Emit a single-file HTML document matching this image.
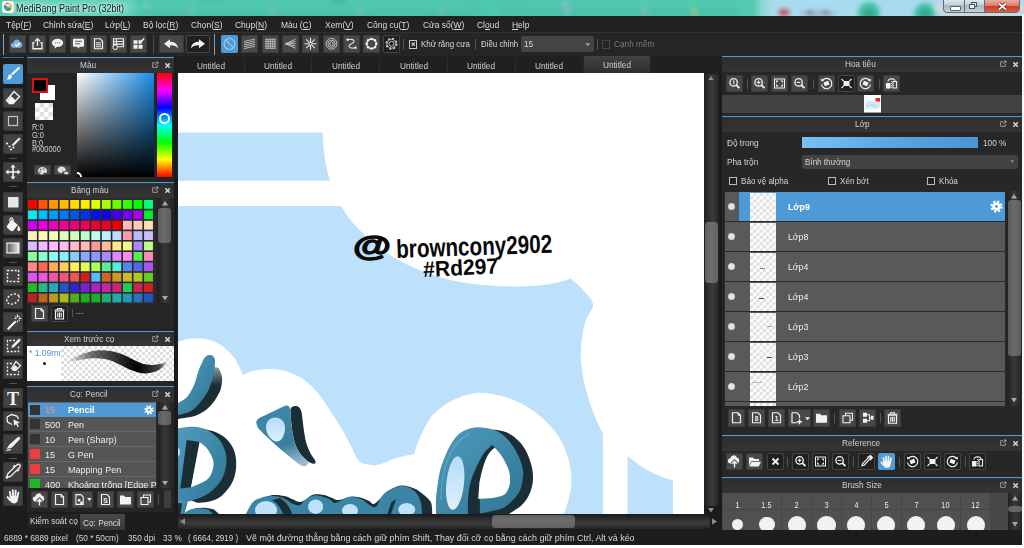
<!DOCTYPE html>
<html lang="vi">
<head>
<meta charset="utf-8">
<title>MediBang Paint Pro (32bit)</title>
<style>
*{box-sizing:border-box;margin:0;padding:0}
html,body{width:1024px;height:548px;overflow:hidden;background:#1f1f1f}
body{position:relative;font-family:"Liberation Sans","DejaVu Sans",sans-serif;font-size:10px;color:#d8d8d8}
.abs{position:absolute}
.x{position:absolute;display:block;white-space:nowrap;transform-origin:0 0;transform:scaleX(.87);line-height:12px;font-size:10px}
#title{left:0;top:0;width:1024px;height:16px;background:linear-gradient(90deg,#52c9ae 0,#4ec8ad 48%,#52caaf 73.500%,#8fd8d6 74.500%,#a9dcee 75.500%,#a8d9ee 100%);overflow:hidden}
.blob{position:absolute;border-radius:50%;filter:blur(2px)}
#menu{left:0;top:16px;width:1022px;height:16px;background:#212121}
#menu .x{top:2px;color:#dcdcdc}
u{text-decoration-thickness:1px;text-underline-offset:1px}
#tbar{left:0;top:32px;width:1022px;height:24px;background:#252525;border-top:1px solid #313131}
.b{position:absolute;width:17px;height:17px;border-radius:2px;background:#484848;box-shadow:inset 0 0 0 1px #3a3a3a}
.b.on{background:#4d9bd8;box-shadow:none}
.b.dk{background:#202020;box-shadow:inset 0 0 0 1px #454545}
.b svg,.tool svg{position:absolute;left:0;top:0;width:100%;height:100%;overflow:visible}
.sep{position:absolute;width:1px;background:#555}
.ph{position:absolute;height:16px;background:linear-gradient(#2f2e2e,#343434);border-top:1px solid #5596cf;box-shadow:inset 0 1px 0 #23384d;overflow:hidden}
.ph .x{top:2px;color:#cfcfcf;font-size:9.5px}
.tool{position:absolute;left:3px;width:20px;height:20px;border-radius:2px;background:#424242;box-shadow:inset 0 0 0 1px #363636}
.tool.on{background:#4d9bd8;box-shadow:none}
.tsep{position:absolute;left:9px;width:8px;height:1px;background:#505050}
.chk{background-color:#fff;background-image:linear-gradient(45deg,#dedede 25%,transparent 25%,transparent 75%,#dedede 75%),linear-gradient(45deg,#dedede 25%,transparent 25%,transparent 75%,#dedede 75%);background-size:6px 6px;background-position:0 0,3px 3px}
.cb{position:absolute;width:8px;height:8px;border:1px solid #bbb;background:#222}
</style>
</head>
<body>

<div id="title" class="abs">
<div class="blob" style="left:142px;top:3px;width:9px;height:7px;background:#8fc4d6;opacity:.5"></div>
<div class="blob" style="left:196px;top:-2px;width:30px;height:6px;background:#44b79d;opacity:.45"></div>
<div class="blob" style="left:330px;top:-3px;width:16px;height:7px;background:#3aa893;opacity:.5"></div>
<div class="blob" style="left:560px;top:1px;width:9px;height:7px;background:#8fc4d6;opacity:.5"></div>
<div class="blob" style="left:500px;top:9px;width:240px;height:7px;background:#46b9a4;opacity:.55;border-radius:3px"></div>
<div class="blob" style="left:690px;top:8px;width:8px;height:7px;background:#b8c870;opacity:.6"></div>
<div class="blob" style="left:858px;top:2px;width:22px;height:22px;background:#45c4a6"></div>
<div class="blob" style="left:914px;top:3px;width:22px;height:22px;background:#45c4a6"></div>
<div class="blob" style="left:863px;top:9px;width:12px;height:9px;background:#2f9580;opacity:.7"></div>
<div class="blob" style="left:919px;top:9px;width:12px;height:9px;background:#2f9580;opacity:.7"></div>
<div class="blob" style="left:800px;top:10px;width:36px;height:7px;background:#9ea0b4;opacity:.6"></div>
<div class="blob" style="left:808px;top:10px;width:4px;height:5px;background:#555a70;opacity:.7"></div>
<div class="blob" style="left:824px;top:10px;width:4px;height:5px;background:#555a70;opacity:.7"></div>
<div class="blob" style="left:778px;top:9px;width:12px;height:7px;background:#d03c44;opacity:.85"></div>
<div class="blob" style="left:934px;top:-4px;width:94px;height:25px;background:#cfd8de;opacity:.95"></div>
<div class="blob" style="left:186px;top:7px;width:9px;height:8px;background:#a9b4dc;opacity:.45"></div>
<div class="blob" style="left:269px;top:7px;width:9px;height:8px;background:#a9b4dc;opacity:.45"></div>
<div class="blob" style="left:355px;top:7px;width:9px;height:8px;background:#a9b4dc;opacity:.45"></div>
<div class="blob" style="left:438px;top:7px;width:9px;height:8px;background:#a9b4dc;opacity:.45"></div>
<div class="blob" style="left:563px;top:7px;width:9px;height:8px;background:#a9b4dc;opacity:.45"></div>
<div class="blob" style="left:640px;top:7px;width:9px;height:8px;background:#a9b4dc;opacity:.45"></div>
<div class="blob" style="left:140px;top:10px;width:340px;height:6px;background:#3fb39c;opacity:.4;border-radius:3px"></div>
<div class="blob" style="left:6px;top:0px;width:128px;height:15px;background:#e6fff8;opacity:.28;filter:blur(4px);border-radius:8px"></div>
<svg class="abs" style="left:2px;top:1px;width:12px;height:12px" viewBox="0 0 12 12"><rect x="0" y="0" width="12" height="12" rx="2.500" fill="#f4f4f4"/><path d="M3 3.500a3.600 3.600 0 0 1 5-1z" fill="#e8413a"/><path d="M8 2.500a3.700 3.700 0 0 1 1.500 5L6 6z" fill="#f4b63a"/><path d="M9.500 7.500A3.700 3.700 0 0 1 3 8.500L6 6z" fill="#35a84e"/><path d="M3 8.500a3.700 3.700 0 0 1 0-5L6 6z" fill="#3a8edb"/></svg>
<span class="x" style="left:16px;top:1.5px;color:#0d1f1a;transform:scaleX(0.9);line-height:13px;text-shadow:0 0 3px rgba(255,255,255,.85),0 0 5px rgba(255,255,255,.6)">MediBang Paint Pro (32bit)</span>
<div class="abs" style="left:943px;top:-2px;width:77px;height:15px;border-radius:0 0 4px 4px;border:1px solid #5a6f7a;overflow:hidden;background:linear-gradient(#e2e9ed,#c6d2d9 45%,#a8b9c4 50%,#c3d0d8)">
<div class="abs" style="left:20px;top:0;width:1px;height:15px;background:#5a6f7a"></div>
<div class="abs" style="left:40px;top:0;width:1px;height:15px;background:#5a6f7a"></div>
<div class="abs" style="left:41px;top:0;width:36px;height:15px;background:linear-gradient(#f0b4a8,#e07a66 45%,#cd3f26 50%,#dc6a50)"></div>
<div class="abs" style="left:6px;top:7px;width:9px;height:3px;background:#fff;border:1px solid #55636b;box-sizing:content-box;border-radius:1px"></div>
<div class="abs" style="left:27px;top:3px;width:6px;height:5px;border:1px solid #4c5960;background:#dfe9ee"></div>
<div class="abs" style="left:25px;top:5px;width:6px;height:5px;border:1px solid #4c5960;background:#eef4f7"></div>
<svg class="abs" style="left:53px;top:3px;width:11px;height:9px" viewBox="0 0 11 9"><path d="M2 1.500l7 6M9 1.500l-7 6" stroke="#5a2018" stroke-width="3.200"/><path d="M2 1.500l7 6M9 1.500l-7 6" stroke="#fff" stroke-width="1.800"/></svg>
</div>
</div>
<div id="menu" class="abs">
<span class="x" style="left:6px;top:3px;font-size:9.5px;transform:scaleX(0.89);">Tệp(<u>F</u>)</span>
<span class="x" style="left:43px;top:3px;font-size:9.5px;transform:scaleX(0.89);">Chỉnh sửa(<u>E</u>)</span>
<span class="x" style="left:105px;top:3px;font-size:9.5px;transform:scaleX(0.89);">Lớp(<u>L</u>)</span>
<span class="x" style="left:143px;top:3px;font-size:9.5px;transform:scaleX(0.89);">Bộ lọc(<u>R</u>)</span>
<span class="x" style="left:191px;top:3px;font-size:9.5px;transform:scaleX(0.89);">Chọn(<u>S</u>)</span>
<span class="x" style="left:235px;top:3px;font-size:9.5px;transform:scaleX(0.89);">Chụp(<u>N</u>)</span>
<span class="x" style="left:281px;top:3px;font-size:9.5px;transform:scaleX(0.89);">Màu (<u>C</u>)</span>
<span class="x" style="left:325px;top:3px;font-size:9.5px;transform:scaleX(0.89);">Xem(<u>V</u>)</span>
<span class="x" style="left:367px;top:3px;font-size:9.5px;transform:scaleX(0.89);">Công cụ(<u>T</u>)</span>
<span class="x" style="left:423px;top:3px;font-size:9.5px;transform:scaleX(0.89);">Cửa sổ(<u>W</u>)</span>
<span class="x" style="left:477px;top:3px;font-size:9.5px;transform:scaleX(0.89);">Cl<u>o</u>ud</span>
<span class="x" style="left:512px;top:3px;font-size:9.5px;transform:scaleX(0.89);"><u>H</u>elp</span>
</div>
<div id="tbar" class="abs">
<div class="abs" style="left:2.500px;top:1px;width:1px;height:21px;background:#7fa3bf"></div>
<div class="b" style="left:9px;top:2px;height:17.5px;"><svg viewBox="0 0 17 17"><path d="M4.6 12.6a2.6 2.6 0 0 1-.3-5.2 3.4 3.4 0 0 1 6.5-1 2.9 2.9 0 0 1 2.4 2.9 2.8 2.8 0 0 1-2.7 3.3z" fill="#7db5ea"/><path d="M6.2 9.2l1.6 1.6 3-3.2" fill="none" stroke="#fff" stroke-width="1.4"/></svg></div>
<div class="b" style="left:29px;top:2px;height:17.5px;"><svg viewBox="0 0 17 17"><path d="M5.5 7.5H4v6h9v-6h-1.5" fill="none" stroke="#f2f2f2" stroke-width="1.3"/><path d="M8.5 10.5V4M6 6l2.5-2.6L11 6" fill="none" stroke="#f2f2f2" stroke-width="1.3"/></svg></div>
<div class="b" style="left:49px;top:2px;height:17.5px;"><svg viewBox="0 0 17 17"><ellipse cx="8.5" cy="7.6" rx="5.6" ry="4" fill="#f2f2f2"/><path d="M6 10.5l-.5 3 3-2.4z" fill="#f2f2f2"/><circle cx="6.4" cy="7.6" r=".7" fill="#666"/><circle cx="8.5" cy="7.6" r=".7" fill="#666"/><circle cx="10.6" cy="7.6" r=".7" fill="#666"/></svg></div>
<div class="b" style="left:69.5px;top:2px;height:17.5px;"><svg viewBox="0 0 17 17"><rect x="3" y="3.5" width="11" height="8" rx="1" fill="#f2f2f2"/><path d="M7 11l1.5 2.4L10 11z" fill="#f2f2f2"/><path d="M5 6h7M5 8.5h5" stroke="#555" stroke-width="1"/></svg></div>
<div class="b" style="left:89.5px;top:2px;height:17.5px;"><svg viewBox="0 0 17 17"><path d="M4.5 3.5h5.5l2.5 2.5v7.5h-8z" fill="none" stroke="#f2f2f2" stroke-width="1.2"/><path d="M6 7.5h5M6 9.5h5M6 11.5h5" stroke="#f2f2f2" stroke-width="1"/></svg></div>
<div class="b" style="left:109.5px;top:2px;height:17.5px;"><svg viewBox="0 0 17 17"><path d="M3.5 3.5h10v8h-10zM3.5 6.2h10M3.5 8.9h10M6.5 3.5v8" fill="none" stroke="#f2f2f2" stroke-width="1.1"/><circle cx="5.2" cy="12" r="2.3" fill="#484848" stroke="#f2f2f2" stroke-width="1"/></svg></div>
<div class="b" style="left:129.5px;top:2px;height:17.5px;"><svg viewBox="0 0 17 17"><path d="M3.5 5h4v3.5h-4zM8.5 5h3v3.5h-3zM3.5 9.5h4v4h-4zM8.5 9.5h4v4h-4z" fill="#f2f2f2"/><path d="M10.5 7l3.6-3.8" stroke="#f2f2f2" stroke-width="1.6"/></svg></div>
<div class="abs" style="left:153px;top:2px;width:1px;height:19px;background:#35506a"></div>
<div class="b" style="left:159px;top:2px;width:25px;height:17.5px;"><svg viewBox="0 0 25 17"><path d="M5 8.5l6-4.5v2.6c5 0 7.5 2.6 8 6.4-1.8-2.3-4.2-3.2-8-3v2.9z" fill="#f2f2f2"/></svg></div>
<div class="b dk" style="left:186px;top:2px;width:24px;height:17.5px;"><svg viewBox="0 0 24 17"><path d="M19 8.5l-6-4.5v2.6c-5 0-7.5 2.6-8 6.4 1.8-2.3 4.2-3.2 8-3v2.9z" fill="#f2f2f2"/></svg></div>
<div class="abs" style="left:214px;top:1px;width:1px;height:21px;background:#7fa3bf"></div>
<div class="b on" style="left:221px;top:2px;height:17.5px;"><svg viewBox="0 0 17 17"><circle cx="8.500" cy="8.700" r="5.500" fill="none" stroke="#a9d3f5" stroke-width="1.050"/><path d="M4.700 4.900l7.600 7.600" stroke="#a9d3f5" stroke-width="1.050"/></svg></div>
<div class="b" style="left:241px;top:2px;height:17.5px;"><svg viewBox="0 0 17 17"><path d="M3 6.2l11-2.4M3 8l11-2.4M3 9.8l11-2.4M3 11.6l11-2.4M3 13.4l11-2.4" stroke="#bdbdbd" stroke-width=".9"/></svg></div>
<div class="b" style="left:261.5px;top:2px;height:17.5px;"><svg viewBox="0 0 17 17"><path d="M4 3.5v10M6.2 3.5v10M8.5 3.5v10M10.8 3.5v10M13 3.5v10M3.5 4h10M3.5 6.2h10M3.5 8.5h10M3.5 10.8h10M3.5 13h10" stroke="#bdbdbd" stroke-width=".9"/></svg></div>
<div class="b" style="left:282px;top:2px;height:17.5px;"><svg viewBox="0 0 17 17"><path d="M3.5 8.5L13.5 4M3.5 8.5L13.5 6.2M3.5 8.5h10M3.5 8.5l10 2.3M3.5 8.5l10 4.5" stroke="#c8c8c8" stroke-width=".9"/></svg></div>
<div class="b" style="left:302px;top:2px;height:17.5px;"><svg viewBox="0 0 17 17"><path d="M8.500 2.500v12M2.500 8.500h12M4.200 4.200l8.600 8.600M12.800 4.200l-8.600 8.600" stroke="#e2e2e2" stroke-width="1.150"/><circle cx="8.500" cy="8.500" r="1" fill="#484848"/></svg></div>
<div class="b" style="left:322.5px;top:2px;height:17.5px;"><svg viewBox="0 0 17 17"><circle cx="8.5" cy="8.5" r="5.4" fill="none" stroke="#cfcfcf" stroke-width=".9"/><circle cx="8.5" cy="8.5" r="3.6" fill="none" stroke="#cfcfcf" stroke-width=".9"/><circle cx="8.5" cy="8.5" r="1.8" fill="none" stroke="#cfcfcf" stroke-width=".9"/></svg></div>
<div class="b" style="left:342.5px;top:2px;height:17.5px;"><svg viewBox="0 0 17 17"><path d="M4.500 4.500C12 3 12.500 6.500 8.500 8.500S5 14 12.500 12.500" fill="none" stroke="#dcdcdc" stroke-width="1.100"/><circle cx="4.500" cy="4.500" r="1.150" fill="#f2f2f2"/><circle cx="12.500" cy="12.500" r="1.150" fill="#f2f2f2"/></svg></div>
<div class="b" style="left:362.5px;top:2px;height:17.5px;"><svg viewBox="0 0 17 17"><circle cx="8.500" cy="8.500" r="4.800" fill="none" stroke="#f2f2f2" stroke-width="1.200"/><circle cx="13.30" cy="8.50" r="1.250" fill="#f2f2f2"/><circle cx="11.89" cy="11.89" r="1.250" fill="#f2f2f2"/><circle cx="8.50" cy="13.30" r="1.250" fill="#f2f2f2"/><circle cx="5.11" cy="11.89" r="1.250" fill="#f2f2f2"/><circle cx="3.70" cy="8.50" r="1.250" fill="#f2f2f2"/><circle cx="5.11" cy="5.11" r="1.250" fill="#f2f2f2"/><circle cx="8.50" cy="3.70" r="1.250" fill="#f2f2f2"/><circle cx="11.89" cy="5.11" r="1.250" fill="#f2f2f2"/></svg></div>
<div class="b dk" style="left:383px;top:2px;height:17.5px;"><svg viewBox="0 0 17 17"><circle cx="8.500" cy="8.500" r="5.300" fill="none" stroke="#cfcfcf" stroke-width="1.500" stroke-dasharray="2.080 2.080"/><circle cx="8.500" cy="8.500" r="4.400" fill="none" stroke="#cfcfcf" stroke-width=".9"/><circle cx="8.500" cy="8.500" r="2.500" fill="none" stroke="#cfcfcf" stroke-width=".9"/></svg></div>
<div class="sep" style="left:403px;top:6px;height:11px"></div>
<div class="cb" style="left:408.500px;top:7px;width:8.500px;height:8.500px;border-color:#c8c8c8"><svg class="abs" style="left:0;top:0;width:6.500px;height:6.500px" viewBox="0 0 7 7"><path d="M1.800 1.800l3.400 3.400M5.200 1.800l-3.400 3.400" stroke="#e4e4e4" stroke-width="1.100"/></svg></div>
<span class="x" style="left:420.5px;top:5px;font-size:9.5px;color:#d8d8d8;transform:scaleX(0.835);">Khử răng cưa</span>
<div class="sep" style="left:475px;top:6px;height:11px"></div>
<span class="x" style="left:480.5px;top:5px;font-size:9.5px;color:#d8d8d8;transform:scaleX(0.83);">Điều chỉnh</span>
<div class="abs" style="left:521px;top:3px;width:73px;height:16px;background:#444;border-radius:2px"></div>
<span class="x" style="left:524px;top:5px;font-size:9.5px;color:#d8d8d8;">15</span>
<svg class="abs" style="left:585px;top:9.500px;width:5.500px;height:3.500px" viewBox="0 0 7 4"><path d="M0 0h7L3.500 4z" fill="#999"/></svg>
<div class="sep" style="left:597px;top:6px;height:11px"></div>
<div class="cb" style="left:601.500px;top:7px;width:8.500px;height:8.500px;border-color:#444;background:#262626"></div>
<span class="x" style="left:614px;top:5px;font-size:9.5px;color:#7a7a7a;">Cạnh mềm</span>
</div>
<div class="abs" style="left:0;top:56px;width:27px;height:474px;background:#1c1c1c"></div>
<div class="abs" style="left:2px;top:57px;width:22px;height:1px;background:#3b6f9c"></div>
<div class="tool on" style="top:64px"><svg viewBox="0 0 20 20"><path d="M16.500 3.200c.6.500.3 1.200-.2 1.700L9.500 11.200 8.200 9.800l6.600-6.400c.5-.5 1.200-.7 1.700-.2z" fill="#fff"/><path d="M7.500 10.600l1.600 1.600c-.3 2-2.300 3.600-5.600 3.400 1.600-.9 1.300-2.300 1.900-3.600.4-.9 1.200-1.400 2.100-1.400z" fill="#fff"/></svg></div>
<div class="tool" style="top:87.5px"><svg viewBox="0 0 20 20"><path d="M11 3.500l5.500 5-6.500 7H6.500L3.500 12.500z" fill="none" stroke="#f2f2f2" stroke-width="1.400"/><path d="M4.500 12.200l3.800-4 4.700 4.200-3.300 3.300H7z" fill="#f2f2f2"/></svg></div>
<div class="tool" style="top:111px"><svg viewBox="0 0 20 20"><rect x="5.500" y="5.500" width="9" height="9" fill="none" stroke="#c4c4c4" stroke-width="1.200"/></svg></div>
<div class="tool" style="top:134px"><svg viewBox="0 0 20 20"><path d="M16 3.500l1.500 1.500-6.500 6.500-2.200.7.700-2.200z" fill="#f2f2f2"/><circle cx="4" cy="9.500" r="1.100" fill="#f2f2f2"/><circle cx="6.500" cy="12.500" r="1.100" fill="#f2f2f2"/><circle cx="8" cy="15.500" r="1.100" fill="#f2f2f2"/><circle cx="10.500" cy="13.500" r="1" fill="#f2f2f2"/></svg></div>
<div class="tsep" style="top:158px"></div>
<div class="tool" style="top:162px"><svg viewBox="0 0 20 20"><path d="M10 2.500l2.600 3h-1.800v3.700h3.700V7.400l3 2.600-3 2.600v-1.800h-3.700v3.700h1.800l-2.600 3-2.600-3h1.800v-3.700H5.500v1.800l-3-2.600 3-2.600v1.800h3.700V5.500H7.400z" fill="#f2f2f2"/></svg></div>
<div class="tsep" style="top:186px"></div>
<div class="tool" style="top:191.5px"><svg viewBox="0 0 20 20"><rect x="5" y="5" width="10.500" height="10.500" fill="#e8e8e8"/></svg></div>
<div class="tool" style="top:215px"><svg viewBox="0 0 20 20"><path d="M8.500 4.500l6.500 5.500-4.500 5.500c-.8.900-2 .9-2.900.2L4.500 13c-.9-.8-.9-1.900-.1-2.800z" fill="#f2f2f2"/><path d="M7 6.500C6 3.500 8 2 9.500 3.500l1.200 2.800" fill="none" stroke="#f2f2f2" stroke-width="1.100"/><path d="M15.500 10.500c1.200 1.800 1.800 3 1.800 3.900a1.500 1.500 0 0 1-3 0c0-.9.400-2.100 1.200-3.900z" fill="#f2f2f2"/></svg></div>
<div class="tool" style="top:238px"><svg viewBox="0 0 20 20"><defs><linearGradient id="gr1" x1="0" x2="1"><stop offset="0" stop-color="#555"/><stop offset="1" stop-color="#eee"/></linearGradient></defs><rect x="4" y="5" width="12" height="10" fill="url(#gr1)" stroke="#eee" stroke-width="1.200"/></svg></div>
<div class="tsep" style="top:261.5px"></div>
<div class="tool" style="top:266px"><svg viewBox="0 0 20 20"><rect x="4.500" y="4.500" width="11" height="11" fill="none" stroke="#f2f2f2" stroke-width="1.500" stroke-dasharray="2 1.600"/></svg></div>
<div class="tool" style="top:289px"><svg viewBox="0 0 20 20"><ellipse cx="10" cy="10" rx="6.500" ry="4.600" transform="rotate(-28 10 10)" fill="none" stroke="#f2f2f2" stroke-width="1.400" stroke-dasharray="2 1.600"/></svg></div>
<div class="tool" style="top:312px"><svg viewBox="0 0 20 20"><path d="M4 16.500l8-8 1.500 1.500-8 8z" fill="#f2f2f2"/><path d="M14.500 2.500v3M14.500 8.500v2M11.500 6.500h2M16 6.500h2.500M12.300 4.300l1 1M16.700 4.300l-1 1M16.700 8.700l-1-1" stroke="#f2f2f2" stroke-width="1.100"/></svg></div>
<div class="tool" style="top:335.5px"><svg viewBox="0 0 20 20"><path d="M12 4.500H4.500v11h11V9" fill="none" stroke="#f2f2f2" stroke-width="1.300" stroke-dasharray="2 1.600"/><path d="M16 2.500l1.800 1.800-7 7-2.500.8.800-2.500z" fill="#f2f2f2"/></svg></div>
<div class="tool" style="top:359px"><svg viewBox="0 0 20 20"><path d="M9 4.500H4.500v11h11V12" fill="none" stroke="#f2f2f2" stroke-width="1.300" stroke-dasharray="2 1.600"/><path d="M13 2.500l4.500 4-4.500 5h-2.500l-2-2z" fill="none" stroke="#f2f2f2" stroke-width="1.200"/><path d="M9 9l3-3 3.200 3-2.500 2.500h-1.800z" fill="#f2f2f2"/></svg></div>
<div class="tsep" style="top:383px"></div>
<div class="tool" style="top:387.5px"><svg viewBox="0 0 20 20"><text x="10" y="16.500" font-size="18" font-family="Liberation Serif,serif" font-weight="bold" fill="#f2f2f2" text-anchor="middle">T</text></svg></div>
<div class="tool" style="top:410.5px"><svg viewBox="0 0 20 20"><path d="M9 13.500L4.500 11L4 6L8.500 3.500L14 5L15.500 8" fill="none" stroke="#f2f2f2" stroke-width="1.300"/><path d="M10.500 8.500l6.500 3-2.700.9 1.700 3-1.300.7-1.700-3-1.900 2z" fill="#f2f2f2"/></svg></div>
<div class="tool" style="top:434px"><svg viewBox="0 0 20 20"><path d="M15.500 2.500l2 2-8.500 9-5.500 1.500 3-4.500z" fill="#f2f2f2"/><path d="M3.500 16.500l4.500-1.200" stroke="#f2f2f2" stroke-width="1.200"/></svg></div>
<div class="tsep" style="top:457.5px"></div>
<div class="tool" style="top:462px"><svg viewBox="0 0 20 20"><path d="M14.500 2.500c1.500-1 3.500 1 2.500 2.500l-2 2 .7.800-1 1-.8-.7-6.400 6.400-2.700.7-.8.800-.7-.7.800-.8.700-2.700 6.400-6.400-.7-.8 1-1 .8.700z" fill="none" stroke="#f2f2f2" stroke-width="1.300"/></svg></div>
<div class="tool" style="top:485.5px"><svg viewBox="0 0 20 20"><g transform="translate(.8,.6) scale(1.12)"><g stroke="#f2f2f2" stroke-width="1.700" stroke-linecap="round" fill="none"><path d="M6.300 9.500L5.400 4.800M8.300 9L8 3.300M10.300 9L10.600 3.600M12.100 9.800L13 5.400M5.600 12L3.400 9.400"/></g><path d="M5.300 8.500L12.900 8.500L12.500 12.200C12.100 14 10.700 15 9 15C7.200 15 6 14 5.400 12.500z" fill="#f2f2f2"/></g></svg></div>
<div class="abs" style="left:27px;top:56px;width:147px;height:474px;background:#252525"></div><div class="abs" style="left:174px;top:56px;width:4px;height:474px;background:#1b1b1b"></div>
<div class="ph" style="left:27px;top:56.5px;width:147px"><span class="x" style="left:53px;top:1px;font-size:9.5px;">Màu</span><div class="abs" style="right:15px;top:2px;width:8px;height:8px"><svg viewBox="0 0 12 12"><path d="M6.500 2.500h-4v7h7v-4" fill="none" stroke="#bdbdbd" stroke-width="1.100"/><path d="M6 6l4.500-4.500M7.500 1.500h3v3" fill="none" stroke="#bdbdbd" stroke-width="1.100"/></svg></div><div class="abs" style="right:3px;top:2.500px;width:7.500px;height:7.500px"><svg viewBox="0 0 11 11"><path d="M2 2l6.500 6.500M8.500 2L2 8.500" stroke="#d0d0d0" stroke-width="2.200"/></svg></div></div>
<div class="abs" style="left:39.500px;top:85px;width:15.500px;height:15px;background:#fff"></div>
<div class="abs" style="left:32px;top:78px;width:16px;height:15px;background:#000;border:2px solid #e01010"></div>
<div class="abs chk" style="left:34.500px;top:102.500px;width:18.500px;height:17.500px;background-size:9px 9px;background-position:0 0,4.500px 4.500px"></div>
<span class="x" style="left:32px;top:121px;font-size:8.5px;color:#d0d0d0;">R:0</span>
<span class="x" style="left:32px;top:129px;font-size:8.5px;color:#d0d0d0;">G:0</span>
<span class="x" style="left:32px;top:137px;font-size:8.5px;color:#d0d0d0;">B:0</span>
<span class="x" style="left:32px;top:143px;font-size:8.5px;color:#d0d0d0;">#000000</span>
<div class="b" style="left:33.500px;top:165px;width:17px;height:10px;background:#4a4a4a"><svg viewBox="0 0 17 10"><path d="M8.500 2a4.500 3.800 0 1 0 1 7.500c-.8-.8 0-1.800 1.200-1.600 2 .3 2.600-1 2.300-2.400C12.500 3.400 10.700 2 8.500 2z" fill="#dcdcdc"/><circle cx="6.500" cy="4.500" r=".8" fill="#555"/><circle cx="9.500" cy="4" r=".8" fill="#555"/><circle cx="6" cy="7" r=".8" fill="#555"/></svg></div>
<div class="b" style="left:54px;top:165px;width:17px;height:10px;background:#4a4a4a"><svg viewBox="0 0 17 10"><path d="M7.500 1.500a4 3.300 0 1 0 1 6.500c-.8-.8 0-1.600 1.200-1.400 1.800.3 2.300-1 2-2.100C11.300 2.800 9.600 1.500 7.500 1.500z" fill="#dcdcdc"/><path d="M10 6.500h4.500v3H10z" fill="#dcdcdc" stroke="#444" stroke-width=".6"/></svg></div>
<div class="abs" style="left:76.500px;top:73px;width:77.500px;height:104px;background:linear-gradient(to top,#000,rgba(0,0,0,0)),linear-gradient(to right,#fff,#1a8ee6)"></div>
<div class="abs" style="left:156.500px;top:73px;width:15.500px;height:104px;background:linear-gradient(#ff0000 0,#ff00ff 16.600%,#0000ff 33.300%,#00ffff 50%,#00ff00 66.600%,#ffff00 83.300%,#ff0000 100%)"></div>
<div class="abs" style="left:159px;top:113px;width:10.500px;height:10.500px;border-radius:50%;border:2.300px solid #fff"></div>
<div class="abs" style="left:76.500px;top:170px;width:6px;height:7px;overflow:hidden"><div class="abs" style="left:-5.500px;top:1.500px;width:10.500px;height:10.500px;border-radius:50%;border:2.300px solid #fff"></div></div>
<div class="ph" style="left:27px;top:181.5px;width:147px"><span class="x" style="left:44px;top:1px;font-size:9.5px;">Bảng màu</span><div class="abs" style="right:15px;top:2px;width:8px;height:8px"><svg viewBox="0 0 12 12"><path d="M6.500 2.500h-4v7h7v-4" fill="none" stroke="#bdbdbd" stroke-width="1.100"/><path d="M6 6l4.500-4.500M7.500 1.500h3v3" fill="none" stroke="#bdbdbd" stroke-width="1.100"/></svg></div><div class="abs" style="right:3px;top:2.500px;width:7.500px;height:7.500px"><svg viewBox="0 0 11 11"><path d="M2 2l6.500 6.500M8.500 2L2 8.500" stroke="#d0d0d0" stroke-width="2.200"/></svg></div></div>
<div class="abs" style="left:27px;top:197.500px;width:129px;height:106px;background:#2b2b2b"></div>
<svg class="abs" style="left:27px;top:198px;width:129px;height:106px" viewBox="27 198 129 106">
<rect x="28.00" y="200.00" width="8.900" height="8.800" fill="#ff0000"/>
<rect x="38.55" y="200.00" width="8.900" height="8.800" fill="#ff5500"/>
<rect x="49.10" y="200.00" width="8.900" height="8.800" fill="#ff9900"/>
<rect x="59.65" y="200.00" width="8.900" height="8.800" fill="#ffbb00"/>
<rect x="70.20" y="200.00" width="8.900" height="8.800" fill="#ffdd00"/>
<rect x="80.75" y="200.00" width="8.900" height="8.800" fill="#ffee00"/>
<rect x="91.30" y="200.00" width="8.900" height="8.800" fill="#ddff00"/>
<rect x="101.85" y="200.00" width="8.900" height="8.800" fill="#aaff00"/>
<rect x="112.40" y="200.00" width="8.900" height="8.800" fill="#66ff00"/>
<rect x="122.95" y="200.00" width="8.900" height="8.800" fill="#33ff00"/>
<rect x="133.50" y="200.00" width="8.900" height="8.800" fill="#00ff00"/>
<rect x="144.05" y="200.00" width="8.900" height="8.800" fill="#00ff77"/>
<rect x="28.00" y="210.40" width="8.900" height="8.800" fill="#00eeee"/>
<rect x="38.55" y="210.40" width="8.900" height="8.800" fill="#00bbff"/>
<rect x="49.10" y="210.40" width="8.900" height="8.800" fill="#0099ff"/>
<rect x="59.65" y="210.40" width="8.900" height="8.800" fill="#0077ff"/>
<rect x="70.20" y="210.40" width="8.900" height="8.800" fill="#0055ee"/>
<rect x="80.75" y="210.40" width="8.900" height="8.800" fill="#0033ee"/>
<rect x="91.30" y="210.40" width="8.900" height="8.800" fill="#0011ee"/>
<rect x="101.85" y="210.40" width="8.900" height="8.800" fill="#1100ee"/>
<rect x="112.40" y="210.40" width="8.900" height="8.800" fill="#4400ee"/>
<rect x="122.95" y="210.40" width="8.900" height="8.800" fill="#7700ee"/>
<rect x="133.50" y="210.40" width="8.900" height="8.800" fill="#aa00ee"/>
<rect x="144.05" y="210.40" width="8.900" height="8.800" fill="#00ee33"/>
<rect x="28.00" y="220.80" width="8.900" height="8.800" fill="#cc00ee"/>
<rect x="38.55" y="220.80" width="8.900" height="8.800" fill="#ee00dd"/>
<rect x="49.10" y="220.80" width="8.900" height="8.800" fill="#ee00bb"/>
<rect x="59.65" y="220.80" width="8.900" height="8.800" fill="#ee0099"/>
<rect x="70.20" y="220.80" width="8.900" height="8.800" fill="#ee0077"/>
<rect x="80.75" y="220.80" width="8.900" height="8.800" fill="#ee0055"/>
<rect x="91.30" y="220.80" width="8.900" height="8.800" fill="#ee0033"/>
<rect x="101.85" y="220.80" width="8.900" height="8.800" fill="#ee0022"/>
<rect x="112.40" y="220.80" width="8.900" height="8.800" fill="#ee0000"/>
<rect x="122.95" y="220.80" width="8.900" height="8.800" fill="#ffbbbb"/>
<rect x="133.50" y="220.80" width="8.900" height="8.800" fill="#ffccbb"/>
<rect x="144.05" y="220.80" width="8.900" height="8.800" fill="#ffddbb"/>
<rect x="28.00" y="231.20" width="8.900" height="8.800" fill="#ffeebb"/>
<rect x="38.55" y="231.20" width="8.900" height="8.800" fill="#ffffbb"/>
<rect x="49.10" y="231.20" width="8.900" height="8.800" fill="#eeffbb"/>
<rect x="59.65" y="231.20" width="8.900" height="8.800" fill="#ddffbb"/>
<rect x="70.20" y="231.20" width="8.900" height="8.800" fill="#ccffbb"/>
<rect x="80.75" y="231.20" width="8.900" height="8.800" fill="#bbffcc"/>
<rect x="91.30" y="231.20" width="8.900" height="8.800" fill="#bbffee"/>
<rect x="101.85" y="231.20" width="8.900" height="8.800" fill="#bbeeff"/>
<rect x="112.40" y="231.20" width="8.900" height="8.800" fill="#bbddff"/>
<rect x="122.95" y="231.20" width="8.900" height="8.800" fill="#ff99aa"/>
<rect x="133.50" y="231.20" width="8.900" height="8.800" fill="#bbbbff"/>
<rect x="144.05" y="231.20" width="8.900" height="8.800" fill="#ccbbff"/>
<rect x="28.00" y="241.60" width="8.900" height="8.800" fill="#ddbbff"/>
<rect x="38.55" y="241.60" width="8.900" height="8.800" fill="#eebbff"/>
<rect x="49.10" y="241.60" width="8.900" height="8.800" fill="#ffbbff"/>
<rect x="59.65" y="241.60" width="8.900" height="8.800" fill="#ffbbee"/>
<rect x="70.20" y="241.60" width="8.900" height="8.800" fill="#ffbbcc"/>
<rect x="80.75" y="241.60" width="8.900" height="8.800" fill="#ffbbbb"/>
<rect x="91.30" y="241.60" width="8.900" height="8.800" fill="#ff9999"/>
<rect x="101.85" y="241.60" width="8.900" height="8.800" fill="#ffbb99"/>
<rect x="112.40" y="241.60" width="8.900" height="8.800" fill="#ffee88"/>
<rect x="122.95" y="241.60" width="8.900" height="8.800" fill="#eeff88"/>
<rect x="133.50" y="241.60" width="8.900" height="8.800" fill="#aa88ff"/>
<rect x="144.05" y="241.60" width="8.900" height="8.800" fill="#bbff88"/>
<rect x="28.00" y="252.00" width="8.900" height="8.800" fill="#88ff99"/>
<rect x="38.55" y="252.00" width="8.900" height="8.800" fill="#88ffcc"/>
<rect x="49.10" y="252.00" width="8.900" height="8.800" fill="#88ffee"/>
<rect x="59.65" y="252.00" width="8.900" height="8.800" fill="#88eeff"/>
<rect x="70.20" y="252.00" width="8.900" height="8.800" fill="#88ccff"/>
<rect x="80.75" y="252.00" width="8.900" height="8.800" fill="#88aaff"/>
<rect x="91.30" y="252.00" width="8.900" height="8.800" fill="#8899ff"/>
<rect x="101.85" y="252.00" width="8.900" height="8.800" fill="#aa88ff"/>
<rect x="112.40" y="252.00" width="8.900" height="8.800" fill="#dd88ff"/>
<rect x="122.95" y="252.00" width="8.900" height="8.800" fill="#ff88ee"/>
<rect x="133.50" y="252.00" width="8.900" height="8.800" fill="#55ee55"/>
<rect x="144.05" y="252.00" width="8.900" height="8.800" fill="#ff88bb"/>
<rect x="28.00" y="262.40" width="8.900" height="8.800" fill="#ff8888"/>
<rect x="38.55" y="262.40" width="8.900" height="8.800" fill="#ff6655"/>
<rect x="49.10" y="262.40" width="8.900" height="8.800" fill="#ffaa55"/>
<rect x="59.65" y="262.40" width="8.900" height="8.800" fill="#ffcc55"/>
<rect x="70.20" y="262.40" width="8.900" height="8.800" fill="#ffee55"/>
<rect x="80.75" y="262.40" width="8.900" height="8.800" fill="#ddff55"/>
<rect x="91.30" y="262.40" width="8.900" height="8.800" fill="#aaff55"/>
<rect x="101.85" y="262.40" width="8.900" height="8.800" fill="#55ee99"/>
<rect x="112.40" y="262.40" width="8.900" height="8.800" fill="#55eedd"/>
<rect x="122.95" y="262.40" width="8.900" height="8.800" fill="#5588ee"/>
<rect x="133.50" y="262.40" width="8.900" height="8.800" fill="#5566ee"/>
<rect x="144.05" y="262.40" width="8.900" height="8.800" fill="#aa55ee"/>
<rect x="28.00" y="272.80" width="8.900" height="8.800" fill="#dd55ee"/>
<rect x="38.55" y="272.80" width="8.900" height="8.800" fill="#ee55dd"/>
<rect x="49.10" y="272.80" width="8.900" height="8.800" fill="#ee55aa"/>
<rect x="59.65" y="272.80" width="8.900" height="8.800" fill="#ee5577"/>
<rect x="70.20" y="272.80" width="8.900" height="8.800" fill="#ee5555"/>
<rect x="80.75" y="272.80" width="8.900" height="8.800" fill="#cc2222"/>
<rect x="91.30" y="272.80" width="8.900" height="8.800" fill="#55bbff"/>
<rect x="101.85" y="272.80" width="8.900" height="8.800" fill="#cc6622"/>
<rect x="112.40" y="272.80" width="8.900" height="8.800" fill="#cc9922"/>
<rect x="122.95" y="272.80" width="8.900" height="8.800" fill="#ccbb22"/>
<rect x="133.50" y="272.80" width="8.900" height="8.800" fill="#aacc22"/>
<rect x="144.05" y="272.80" width="8.900" height="8.800" fill="#66cc22"/>
<rect x="28.00" y="283.20" width="8.900" height="8.800" fill="#22bb22"/>
<rect x="38.55" y="283.20" width="8.900" height="8.800" fill="#22bb88"/>
<rect x="49.10" y="283.20" width="8.900" height="8.800" fill="#22aabb"/>
<rect x="59.65" y="283.20" width="8.900" height="8.800" fill="#2255cc"/>
<rect x="70.20" y="283.20" width="8.900" height="8.800" fill="#3322cc"/>
<rect x="80.75" y="283.20" width="8.900" height="8.800" fill="#7722cc"/>
<rect x="91.30" y="283.20" width="8.900" height="8.800" fill="#aa22cc"/>
<rect x="101.85" y="283.20" width="8.900" height="8.800" fill="#cc22aa"/>
<rect x="112.40" y="283.20" width="8.900" height="8.800" fill="#cc2277"/>
<rect x="122.95" y="283.20" width="8.900" height="8.800" fill="#22cc55"/>
<rect x="133.50" y="283.20" width="8.900" height="8.800" fill="#cc2255"/>
<rect x="144.05" y="283.20" width="8.900" height="8.800" fill="#cc2222"/>
<rect x="28.00" y="293.60" width="8.900" height="8.800" fill="#bb2222"/>
<rect x="38.55" y="293.60" width="8.900" height="8.800" fill="#bb6622"/>
<rect x="49.10" y="293.60" width="8.900" height="8.800" fill="#bb9922"/>
<rect x="59.65" y="293.60" width="8.900" height="8.800" fill="#aabb22"/>
<rect x="70.20" y="293.60" width="8.900" height="8.800" fill="#55aa22"/>
<rect x="80.75" y="293.60" width="8.900" height="8.800" fill="#22aa22"/>
<rect x="91.30" y="293.60" width="8.900" height="8.800" fill="#22aa33"/>
<rect x="101.85" y="293.60" width="8.900" height="8.800" fill="#22aa77"/>
<rect x="112.40" y="293.60" width="8.900" height="8.800" fill="#22aaaa"/>
<rect x="122.95" y="293.60" width="8.900" height="8.800" fill="#2299bb"/>
<rect x="133.50" y="293.60" width="8.900" height="8.800" fill="#2277bb"/>
<rect x="144.05" y="293.60" width="8.900" height="8.800" fill="#2255bb"/>
</svg>
<div class="abs" style="left:157.5px;top:198px;width:14px;height:105px;background:linear-gradient(90deg,#202020,#383838 50%,#262626)"><svg class="abs" style="left:4.0px;top:3px;width:6px;height:4.500px" viewBox="0 0 7 5"><path d="M0 5h7L3.500 0z" fill="#a8a8a8"/></svg><svg class="abs" style="left:4.0px;bottom:3px;width:6px;height:4.500px" viewBox="0 0 7 5"><path d="M0 0h7L3.500 5z" fill="#a8a8a8"/></svg><div class="abs" style="left:0.500px;top:10px;width:13px;height:34.5px;border-radius:3px;background:linear-gradient(90deg,#5a5a5a,#6a6a6a 40%,#5e5e5e)"></div></div>
<div class="b" style="left:31px;top:305px;"><svg viewBox="0 0 17 17"><path d="M4.5 3.500h5.500l2.500 2.500v7.500h-8z" fill="none" stroke="#f2f2f2" stroke-width="1.2"/><path d="M10 3.500v2.500h2.500" fill="none" stroke="#f2f2f2" stroke-width="1"/></svg></div>
<div class="b dk" style="left:51px;top:305px;"><svg viewBox="0 0 17 17"><path d="M4.500 6h8v8h-8z" fill="none" stroke="#f2f2f2" stroke-width="1.200"/><path d="M3.500 5h10M6.500 5V3.500h4V5M6.800 7.500v5M8.500 7.500v5M10.200 7.500v5" fill="none" stroke="#f2f2f2" stroke-width="1.100"/></svg></div>
<div class="sep" style="left:72px;top:309px;height:8px;background:#555"></div>
<span class="x" style="left:76px;top:307px;font-size:9px;color:#999;">---</span>
<div class="ph" style="left:27px;top:331px;width:147px"><span class="x" style="left:37px;top:1px;font-size:9.5px;">Xem trước cọ</span><div class="abs" style="right:15px;top:2px;width:8px;height:8px"><svg viewBox="0 0 12 12"><path d="M6.500 2.500h-4v7h7v-4" fill="none" stroke="#bdbdbd" stroke-width="1.100"/><path d="M6 6l4.500-4.500M7.500 1.500h3v3" fill="none" stroke="#bdbdbd" stroke-width="1.100"/></svg></div><div class="abs" style="right:3px;top:2.500px;width:7.500px;height:7.500px"><svg viewBox="0 0 11 11"><path d="M2 2l6.500 6.500M8.500 2L2 8.500" stroke="#d0d0d0" stroke-width="2.200"/></svg></div></div>
<div class="abs" style="left:27px;top:345.500px;width:34px;height:35.500px;background:#fff"></div>
<div class="abs chk" style="left:61px;top:345.500px;width:113px;height:35.500px;background-size:6px 6px;background-position:0 0,3px 3px"></div>
<span class="x" style="left:29px;top:346.5px;font-size:9.5px;color:#4d8fd1;transform:scaleX(0.9);width:35px;overflow:hidden">* 1.09mm</span>
<div class="abs" style="left:42.500px;top:361.500px;width:3px;height:3px;border-radius:50%;background:#111"></div>
<svg class="abs" style="left:61px;top:347px;width:115px;height:34px" viewBox="61 347 115 34"><defs><linearGradient id="bs" x1="0" x2="1"><stop offset="0" stop-color="#000" stop-opacity="0"/><stop offset=".25" stop-color="#000" stop-opacity=".55"/><stop offset=".7" stop-color="#000" stop-opacity="1"/><stop offset=".92" stop-color="#000" stop-opacity=".7"/><stop offset="1" stop-color="#000" stop-opacity="0"/></linearGradient></defs>
<path d="M66 363C72 358 84 352 96 350.500C110 349 122 353 134 360C144 365.500 154 367 168 361.500C164 368 156 373 146 373.500C134 373.500 124 366 112 361C100 356.500 86 358 66 363z" fill="url(#bs)"/></svg>
<div class="ph" style="left:27px;top:385.5px;width:147px"><span class="x" style="left:43px;top:1px;font-size:9.5px;">Cọ: Pencil</span><div class="abs" style="right:15px;top:2px;width:8px;height:8px"><svg viewBox="0 0 12 12"><path d="M6.500 2.500h-4v7h7v-4" fill="none" stroke="#bdbdbd" stroke-width="1.100"/><path d="M6 6l4.500-4.500M7.500 1.500h3v3" fill="none" stroke="#bdbdbd" stroke-width="1.100"/></svg></div><div class="abs" style="right:3px;top:2.500px;width:7.500px;height:7.500px"><svg viewBox="0 0 11 11"><path d="M2 2l6.500 6.500M8.500 2L2 8.500" stroke="#d0d0d0" stroke-width="2.200"/></svg></div></div>
<div class="abs" style="left:27px;top:402px;width:130px;height:86px;background:#2a2a2a;overflow:hidden"><div class="abs" style="left:1px;top:0;width:128px;height:86px;background:#676767"></div>
<div class="abs" style="left:1px;top:0.5px;width:128px;height:14px;background:#4e9ad6"></div>
<div class="abs" style="left:3px;top:2.5px;width:10px;height:10px;background:#333"></div>
<span class="x" style="left:17.5px;top:2.0px;font-size:9.5px;color:#e08a8a;transform:scaleX(0.96);font-weight:bold;">15</span>
<span class="x" style="left:41px;top:2.0px;font-size:9.5px;color:#fff;transform:scaleX(0.95);font-weight:bold;">Pencil</span>
<div class="abs" style="left:1px;top:15.4px;width:128px;height:14px;background:#555"></div>
<div class="abs" style="left:3px;top:17.4px;width:10px;height:10px;background:#333"></div>
<span class="x" style="left:17.5px;top:16.95px;font-size:9.5px;color:#eee;transform:scaleX(0.96);">500</span>
<span class="x" style="left:41px;top:16.95px;font-size:9.5px;color:#eee;transform:scaleX(0.95);">Pen</span>
<div class="abs" style="left:1px;top:30.4px;width:128px;height:14px;background:#555"></div>
<div class="abs" style="left:3px;top:32.4px;width:10px;height:10px;background:#333"></div>
<span class="x" style="left:17.5px;top:31.9px;font-size:9.5px;color:#eee;transform:scaleX(0.96);">10</span>
<span class="x" style="left:41px;top:31.9px;font-size:9.5px;color:#eee;transform:scaleX(0.95);">Pen (Sharp)</span>
<div class="abs" style="left:1px;top:45.3px;width:128px;height:14px;background:#555"></div>
<div class="abs" style="left:3px;top:47.3px;width:10px;height:10px;background:#f03c3c"></div>
<span class="x" style="left:17.5px;top:46.849999999999994px;font-size:9.5px;color:#eee;transform:scaleX(0.96);">15</span>
<span class="x" style="left:41px;top:46.849999999999994px;font-size:9.5px;color:#eee;transform:scaleX(0.95);">G Pen</span>
<div class="abs" style="left:1px;top:60.3px;width:128px;height:14px;background:#555"></div>
<div class="abs" style="left:3px;top:62.3px;width:10px;height:10px;background:#f03c3c"></div>
<span class="x" style="left:17.5px;top:61.8px;font-size:9.5px;color:#eee;transform:scaleX(0.96);">15</span>
<span class="x" style="left:41px;top:61.8px;font-size:9.5px;color:#eee;transform:scaleX(0.95);">Mapping Pen</span>
<div class="abs" style="left:1px;top:75.2px;width:128px;height:14px;background:#555"></div>
<div class="abs" style="left:3px;top:77.2px;width:10px;height:10px;background:#1fb81f"></div>
<span class="x" style="left:17.5px;top:76.75px;font-size:9.5px;color:#eee;transform:scaleX(0.96);">400</span>
<span class="x" style="left:41px;top:76.75px;font-size:9.5px;color:#eee;transform:scaleX(0.95);">Khoảng trống [Edge P</span>
<svg class="abs" style="left:117px;top:2.500px;width:10px;height:10px" viewBox="0 0 10 10"><circle cx="5" cy="5" r="3.500" fill="none" stroke="#fff" stroke-width="2.400" stroke-dasharray="1.500 1.249"/><circle cx="5" cy="5" r="3.100" fill="#fff"/><circle cx="5" cy="5" r="1.150" fill="#4e9ad6"/></svg>
</div>
<div class="abs" style="left:157.5px;top:402px;width:14px;height:86px;background:linear-gradient(90deg,#202020,#383838 50%,#262626)"><svg class="abs" style="left:4.0px;top:3px;width:6px;height:4.500px" viewBox="0 0 7 5"><path d="M0 5h7L3.500 0z" fill="#a8a8a8"/></svg><svg class="abs" style="left:4.0px;bottom:3px;width:6px;height:4.500px" viewBox="0 0 7 5"><path d="M0 0h7L3.500 5z" fill="#a8a8a8"/></svg><div class="abs" style="left:0.500px;top:9px;width:13px;height:14px;border-radius:3px;background:linear-gradient(90deg,#5a5a5a,#6a6a6a 40%,#5e5e5e)"></div></div>
<div class="b" style="left:31px;top:491px;"><svg viewBox="0 0 17 17"><path d="M4.600 10.600a2.600 2.600 0 0 1-.3-5.200 3.400 3.400 0 0 1 6.500-1 2.900 2.900 0 0 1 2.400 2.900 2.800 2.800 0 0 1-2.700 3.300z" fill="#f2f2f2"/><path d="M8.500 14.500V8.500M6 10.500l2.500-2.700 2.500 2.700" stroke="#484848" stroke-width="2.600" fill="none"/><path d="M8.500 14.500V8.800M6.300 10.800l2.200-2.400 2.200 2.400" stroke="#f2f2f2" stroke-width="1.400" fill="none"/></svg></div>
<div class="b" style="left:51px;top:491px;"><svg viewBox="0 0 17 17"><path d="M4.5 3.500h5.500l2.500 2.500v7.500h-8z" fill="none" stroke="#f2f2f2" stroke-width="1.2"/><path d="M10 3.500v2.500h2.500" fill="none" stroke="#f2f2f2" stroke-width="1"/></svg></div>
<div class="b" style="left:71.5px;top:491px;width:21.5px;"><svg viewBox="0 0 22 17"><path d="M4 3.500h5l2.500 2.500v7.500H4z" fill="none" stroke="#f2f2f2" stroke-width="1.100"/><path d="M6 8h2.500v2.500H6zM8.500 10.500H11V13H8.500z" fill="#f2f2f2"/><path d="M15.500 7l2.300 3 2.300-3z" fill="#f2f2f2"/></svg></div>
<div class="b" style="left:96.5px;top:491px;"><svg viewBox="0 0 17 17"><path d="M4.5 3.500h5.500l2.500 2.500v7.500h-8z" fill="none" stroke="#f2f2f2" stroke-width="1.100"/><text x="8.500" y="12" font-size="6.500" font-family="Liberation Sans,sans-serif" fill="#f2f2f2" text-anchor="middle" font-weight="bold">S</text></svg></div>
<div class="b" style="left:117px;top:491px;"><svg viewBox="0 0 17 17"><path d="M3 4.500h4l1.200 1.500H14v7.500H3z" fill="#f2f2f2"/></svg></div>
<div class="b" style="left:137px;top:491px;"><svg viewBox="0 0 17 17"><path d="M6.500 4h7v7h-7z" fill="none" stroke="#f2f2f2" stroke-width="1.100"/><path d="M4 6.500h7v7H4z" fill="#484848" stroke="#f2f2f2" stroke-width="1.100"/></svg></div>
<div class="sep" style="left:158px;top:494px;height:11px"></div>
<div class="abs" style="left:163.500px;top:490px;width:7px;height:18px;background:#3e3e3e;border-radius:2px"></div>
<div class="abs" style="left:27px;top:512px;width:147px;height:18px;background:#1c1c1c"></div>
<div class="abs" style="left:28px;top:513.500px;width:51px;height:14.500px;background:#242424"></div>
<div class="abs" style="left:79.500px;top:514px;width:45px;height:16px;background:linear-gradient(#484848,#383838)"></div>
<span class="x" style="left:30px;top:515px;font-size:9.5px;color:#ddd;">Kiểm soát cọ</span>
<span class="x" style="left:83px;top:517px;font-size:9.5px;color:#ddd;">Cọ: Pencil</span>
<div class="abs" style="left:176px;top:56px;width:546px;height:17px;background:#202020"></div>
<div class="abs" style="left:243.7px;top:58px;width:1px;height:14px;background:#2e2e2e"></div>
<span class="x" style="left:196.5px;top:60px;font-size:9.500px;color:#cfcfcf">Untitled</span>
<div class="abs" style="left:311.4px;top:58px;width:1px;height:14px;background:#2e2e2e"></div>
<span class="x" style="left:264.2px;top:60px;font-size:9.500px;color:#cfcfcf">Untitled</span>
<div class="abs" style="left:379.1px;top:58px;width:1px;height:14px;background:#2e2e2e"></div>
<span class="x" style="left:331.9px;top:60px;font-size:9.500px;color:#cfcfcf">Untitled</span>
<div class="abs" style="left:446.8px;top:58px;width:1px;height:14px;background:#2e2e2e"></div>
<span class="x" style="left:399.6px;top:60px;font-size:9.500px;color:#cfcfcf">Untitled</span>
<div class="abs" style="left:514.5px;top:58px;width:1px;height:14px;background:#2e2e2e"></div>
<span class="x" style="left:467.3px;top:60px;font-size:9.500px;color:#cfcfcf">Untitled</span>
<div class="abs" style="left:582.2px;top:58px;width:1px;height:14px;background:#2e2e2e"></div>
<span class="x" style="left:535.0px;top:60px;font-size:9.500px;color:#cfcfcf">Untitled</span>
<div class="abs" style="left:583.7px;top:56px;width:66.300px;height:17px;border-radius:1px 1px 0 0;background:linear-gradient(#424242,#2e2e2e)"></div>
<span class="x" style="left:602.7px;top:59px;font-size:9.500px;color:#cfcfcf">Untitled</span>
<div class="abs" style="left:176px;top:73px;width:2px;height:457px;background:#1b1b1b"></div>
<svg class="abs" style="left:178px;top:73px;width:525.500px;height:441px" viewBox="178 73 525.500 441">
<defs>
<linearGradient id="tl" x1="0" x2="1" y1="0" y2="1"><stop offset="0" stop-color="#4f9bbd"/><stop offset="1" stop-color="#2f7595"/></linearGradient>
<linearGradient id="tri" x1=".45" x2=".75" y1="0" y2="1"><stop offset="0" stop-color="#3f88aa"/><stop offset=".62" stop-color="#3b7f9f"/><stop offset="1" stop-color="#9dbccc"/></linearGradient>
<linearGradient id="hk" x1="0" x2="0" y1="0" y2="1"><stop offset="0" stop-color="#8a9aa0"/><stop offset=".35" stop-color="#1b2e36"/></linearGradient>
<linearGradient id="hl" x1="0" x2="0" y1="0" y2="1"><stop offset="0" stop-color="#b4dcf8"/><stop offset="1" stop-color="#dff0fb"/></linearGradient>
</defs>
<rect x="178" y="73" width="526" height="441" fill="#fff"/>
<path d="M178 132.500H322.500C323 150 326 168 330 180.800H178z" fill="#bde1fb"/>
<path d="M178 206H341.200C342.5 208.0 345.9 213.9 349.0 218.0C352.1 222.1 356.5 226.8 360.0 230.5C363.5 234.2 365.3 236.1 370.0 240.0C374.7 243.9 381.3 249.7 388.0 254.0C394.7 258.3 403.0 262.7 410.0 266.0C417.0 269.3 423.3 271.7 430.0 274.0C436.7 276.3 443.3 278.4 450.0 280.0C456.7 281.6 463.3 282.6 470.0 283.5C476.7 284.4 483.3 285.0 490.0 285.5C496.7 286.0 503.2 286.4 510.0 286.5C516.8 286.6 524.3 286.4 531.0 286.0C537.7 285.6 543.8 285.0 550.0 284.0C556.2 283.0 565.0 280.7 568.0 280.0L570 278C572.0 279.8 578.2 284.7 582.0 289.0C585.8 293.3 592.3 298.8 593.0 304.0C593.7 309.2 587.8 314.3 586.0 320.0C584.2 325.7 582.8 331.2 582.0 338.0C581.2 344.8 580.4 352.6 581.0 361.0C581.6 369.4 583.3 379.3 585.6 388.5C587.9 397.7 591.8 408.4 594.7 416.0C597.6 423.6 601.6 431.0 603.0 434.0V514H178z" fill="#bde1fb"/>
<path d="M627.500 514V456C640 467 656 476 673 480.500V514z" fill="#bde1fb"/>
<path d="M177.0 342.5C179.0 341.9 184.4 339.4 189.0 338.8C193.6 338.2 199.4 337.9 204.5 338.8C209.6 339.7 215.1 341.3 219.8 344.2C224.6 347.1 229.7 352.5 233.0 356.3C236.3 360.1 237.9 364.1 239.5 367.2C241.1 370.3 242.2 373.6 242.8 374.9C244.8 374.2 250.3 371.5 254.8 370.5C259.3 369.5 264.9 368.9 270.0 369.0C275.1 369.1 280.0 369.3 285.5 371.0C291.0 372.7 297.5 375.2 303.0 379.0C308.5 382.8 314.0 388.5 318.3 393.5C322.6 398.5 325.4 403.4 329.0 408.8C332.6 414.2 336.5 420.1 340.0 426.0C343.5 431.9 346.9 438.2 350.0 444.0C353.1 449.8 355.6 457.1 358.6 460.5C361.6 463.9 364.8 463.8 368.0 464.5C371.2 465.2 373.3 465.9 378.0 464.8C382.7 463.7 390.3 459.8 396.4 458.0C402.4 456.2 411.3 454.7 414.3 454.0C415.1 451.5 416.4 445.2 419.4 438.8C422.4 432.4 426.7 422.2 432.2 415.8C437.7 409.4 444.9 404.2 452.6 400.4C460.3 396.6 469.7 393.4 478.2 392.8C486.7 392.2 495.2 394.1 503.7 396.6C512.2 399.1 520.8 402.3 529.3 408.0C537.8 413.7 548.4 422.9 554.8 431.0C561.2 439.1 564.8 448.1 567.6 456.6C570.4 465.1 571.7 473.7 571.5 482.2C571.3 490.7 567.7 502.4 566.3 507.7C564.9 513.0 563.5 513.0 563.0 514.0H177z" fill="#fff"/>
<path d="M218.7 368.0C219.2 369.5 221.6 373.7 222.0 377.0C222.4 380.3 221.7 384.9 221.0 388.0C220.3 391.1 219.1 393.0 217.6 395.7C216.1 398.4 214.2 401.4 212.0 404.0C209.8 406.6 207.2 409.1 204.5 411.0C201.8 412.9 198.9 414.4 196.0 415.5C193.1 416.6 190.0 417.0 187.0 417.6C184.0 418.2 179.5 418.8 178.0 419.0V404C180.0 403.3 186.0 402.3 190.0 400.0C194.0 397.7 198.7 393.7 202.0 390.0C205.3 386.3 208.0 381.7 210.0 378.0C212.0 374.3 212.6 369.7 214.0 368.0C215.4 366.3 217.9 368.0 218.7 368.0z" fill="url(#hk)"/>
<path d="M215.0 360.6C214.9 362.2 215.0 366.8 214.5 370.0C214.0 373.2 213.1 376.5 212.0 380.0C210.9 383.5 209.7 387.7 208.0 391.0C206.3 394.3 204.0 397.3 202.0 400.0C200.0 402.7 198.2 405.0 196.0 407.0C193.8 409.0 192.0 410.7 189.0 412.0C186.0 413.3 179.8 414.5 178.0 415.0L178 403C179.3 402.2 183.8 400.0 186.0 398.0C188.2 396.0 189.5 393.6 191.0 391.0C192.5 388.4 193.8 385.8 195.0 382.5C196.2 379.2 197.2 374.6 198.5 371.0C199.8 367.4 202.2 362.3 203.0 360.6C205 353.500 214.500 353 215 360.600z" fill="url(#tl)"/>
<path d="M201.8 429.0C203.8 429.4 210.1 430.0 214.0 431.5C217.9 433.0 222.2 435.2 225.4 438.0C228.6 440.8 231.2 444.4 233.0 448.0C234.8 451.6 235.6 455.4 236.0 459.4C236.4 463.4 236.2 468.1 235.5 472.0C234.8 475.9 233.7 479.6 231.9 483.0C230.2 486.4 227.5 489.8 225.0 492.5C222.5 495.2 219.8 497.4 216.8 499.0C213.8 500.6 210.2 501.4 207.0 502.0C203.8 502.6 199.1 502.7 197.5 502.8L190 500L195 430z" fill="#1b2e36"/>
<path d="M178.0 428.3C180.5 428.1 188.0 426.5 193.0 426.8C198.0 427.1 203.3 427.9 208.0 430.4C212.7 432.9 217.9 437.2 221.0 442.0C224.1 446.8 226.3 453.3 226.5 459.4C226.7 465.5 225.1 473.0 222.0 478.7C218.9 484.4 213.5 490.0 208.0 493.8C202.5 497.6 194.0 499.9 189.0 501.3C184.0 502.7 179.8 502.2 178.0 502.4z" fill="url(#tl)"/>
<path d="M186.700 440L199.600 442L191 487.300L180.300 488.400z" fill="#1b2e36"/>
<path d="M199.6 442.0C201.0 443.3 205.7 446.1 208.0 449.7C210.3 453.3 213.6 458.9 213.6 463.7C213.6 468.5 211.8 474.8 208.0 478.7C204.2 482.6 193.8 485.9 191.0 487.3z" fill="#fff"/>
<ellipse cx="177.500" cy="452" rx="2.500" ry="4" fill="#bfe2fb"/>
<path d="M178 500L188 501L184.500 514H178z" fill="url(#tl)"/><path d="M178 503L182 503.500L180.500 514H178z" fill="#1b2e36"/>
<path d="M186 514C190 508 202 506 214 509.500L219 514z" fill="#1b2e36"/><path d="M184 514C188 508.500 198 507 208 509.500L213 514z" fill="#3a84a6"/>
<path d="M291 408C292.500 406 296 405.500 298 406.500C300.500 408 301.500 411 302 415C303 424 304 432 305.500 440C307.500 448 310.500 454 313.500 458C315 460 316.500 462.500 315 463.500C313 464.500 310.500 463 308 461.500L302 456C299 452 296 448 294 440C292 432 291 422 290.300 410z" fill="#1b2e36"/>
<path d="M256.500 424C255.500 420.500 258.500 418 262.500 416.500L284.500 406C288 404.500 290 406.500 290.300 410C291 422 292 432 294 440C296 448 299 452 302 456L307.500 461C309 463 308 465 305.500 466C303.500 466.500 301.500 466 299.500 464.500C285 453.500 269 439.500 258 428z" fill="url(#tri)"/>
<path d="M275.400 417.500C281.500 417.500 285.500 422.500 285 429C284.500 436 281 441.500 277 441.500C271.500 441.500 266 434 266 427C266 421.500 270 417.500 275.400 417.500z" fill="url(#hl)"/>
<path d="M249.0 514.0C250.2 512.0 252.4 505.1 256.0 502.0C259.6 498.9 265.8 496.5 270.5 495.5C275.2 494.5 280.4 495.4 284.0 496.0C287.6 496.6 289.5 498.0 292.0 499.0C294.5 500.0 296.8 501.8 299.0 502.0C301.2 502.2 302.6 501.2 305.0 500.0C307.4 498.8 310.3 495.3 313.5 494.5C316.7 493.7 320.9 494.4 324.0 495.0C327.1 495.6 329.8 497.2 332.0 498.0C334.2 498.8 335.2 499.8 337.0 500.0C338.8 500.2 340.5 499.6 343.0 499.0C345.5 498.4 348.8 496.7 352.0 496.5C355.2 496.3 359.2 497.2 362.0 498.0C364.8 498.8 367.1 500.0 369.0 501.0C370.9 502.0 371.8 504.3 373.6 504.0C375.4 503.7 377.3 501.3 380.0 499.0C382.7 496.7 386.4 492.2 390.0 490.0C393.6 487.8 397.4 485.7 401.5 485.5C405.6 485.3 410.6 487.0 414.3 488.6C418.1 490.2 421.2 492.7 424.0 495.0C426.8 497.3 429.6 499.4 431.0 502.6C432.4 505.8 432.0 512.1 432.2 514.0z" fill="#1b2e36"/>
<path d="M245.8 514.0C247.0 512.0 250.3 504.8 253.0 502.0C255.7 499.2 259.1 498.5 262.0 497.5C264.9 496.5 267.5 496.1 270.5 496.0C273.5 495.9 277.2 496.3 280.0 497.0C282.8 497.7 284.8 498.8 287.0 500.0C289.2 501.2 290.8 503.2 293.0 504.0C295.2 504.8 298.0 505.7 300.0 505.0C302.0 504.3 302.8 501.6 305.0 500.0C307.2 498.4 310.7 496.1 313.5 495.5C316.3 494.9 319.1 495.8 322.0 496.5C324.9 497.2 328.7 498.9 330.7 500.0C332.7 501.1 332.8 502.7 334.0 503.0C335.2 503.3 335.7 503.0 338.0 502.0C340.3 501.0 344.9 497.8 347.9 497.0C350.9 496.2 353.5 497.0 356.0 497.5C358.5 498.0 361.0 498.9 363.0 500.0C365.0 501.1 365.9 502.8 368.0 504.0C370.1 505.2 373.5 508.3 375.8 507.0C378.1 505.7 379.6 498.9 382.0 496.0C384.4 493.1 386.8 491.2 390.0 489.5C393.2 487.8 398.2 486.2 401.5 486.0C404.8 485.8 407.4 486.7 410.0 488.0C412.6 489.3 415.2 491.5 417.0 494.0C418.8 496.5 420.2 499.7 421.0 503.0C421.8 506.3 421.8 512.2 422.0 514.0z" fill="#3a84a6"/>
<path d="M391.300 502.600L396 499L391 514H387.500z" fill="#1b2e36"/>
<ellipse cx="266" cy="510" rx="11" ry="9" fill="#bfe2fb"/><ellipse cx="315.600" cy="506.700" rx="7.500" ry="7.200" fill="#bfe2fb"/><ellipse cx="350" cy="510.500" rx="8" ry="6.500" fill="#bfe2fb"/><ellipse cx="406.700" cy="509.500" rx="8.500" ry="6.500" fill="#bfe2fb"/>
<path d="M283 514C280 506 276 502 272 500L280 498C286 502 290 507 292 514z" fill="#1b2e36"/>
<path d="M496.0 429.8C498.0 430.3 504.2 431.1 508.0 433.0C511.8 434.9 515.8 438.0 519.0 441.3C522.2 444.6 524.9 448.7 527.0 453.0C529.1 457.3 530.8 462.7 531.8 466.9C532.8 471.1 533.0 474.6 533.0 478.0C533.0 481.4 532.6 484.1 531.8 487.3C531.0 490.5 529.7 494.0 528.0 497.0C526.3 500.0 523.8 503.0 521.6 505.2C519.4 507.4 517.1 508.5 515.0 510.0C512.9 511.5 509.9 513.3 508.9 514.0H470L480 430z" fill="#1b2e36"/>
<path d="M436.0 514.0C436.0 511.7 435.8 504.4 436.0 500.0C436.2 495.6 436.6 492.1 437.3 487.3C438.0 482.5 438.7 476.1 440.0 471.0C441.3 465.9 443.2 460.9 445.0 456.6C446.8 452.3 448.4 448.6 450.5 445.0C452.6 441.4 455.1 437.6 457.8 435.0C460.6 432.4 463.6 430.8 467.0 429.5C470.4 428.2 473.8 427.2 478.2 427.3C482.6 427.4 489.4 428.5 493.5 429.8C497.6 431.1 500.0 432.6 503.0 435.0C506.0 437.4 508.8 440.4 511.4 443.9C514.0 447.4 516.6 451.8 518.5 456.0C520.4 460.2 522.2 465.2 522.9 469.4C523.6 473.6 523.1 477.2 522.5 481.0C521.9 484.8 520.8 489.1 519.0 492.4C517.2 495.7 514.5 498.4 512.0 501.0C509.4 503.6 507.0 506.0 503.7 507.7C500.4 509.4 496.2 509.9 492.0 511.0C487.8 512.0 480.5 513.5 478.2 514.0z" fill="url(#tl)"/>
<path d="M492.2 445.0C490.8 446.3 486.5 449.5 484.0 453.0C481.5 456.5 479.2 461.1 477.0 466.0C474.8 470.9 472.0 476.5 470.5 482.2C469.0 487.9 468.4 494.7 468.0 500.0C467.6 505.3 468.0 511.7 468.0 514.0H480L479.500 482.200L485.900 459.200L494.800 447.700z" fill="#1b2e36"/>
<path d="M494.8 447.7C495.8 448.9 499.1 452.2 501.0 455.0C502.9 457.8 504.9 461.3 506.3 464.3C507.7 467.3 508.9 470.0 509.5 473.0C510.1 476.0 510.2 479.4 510.0 482.2C509.8 484.9 509.1 487.4 508.0 489.5C506.9 491.6 506.4 493.6 503.7 495.0C501.0 496.4 496.2 497.4 492.0 498.0C487.8 498.6 480.5 498.7 478.2 498.8L479.500 482.200C481 474 483 466 485.900 459.200C488 454 491 450 494.800 447.700z" fill="#fff"/>
<ellipse cx="455.200" cy="483" rx="8.800" ry="27" transform="rotate(6 455.200 483)" fill="url(#hl)"/>
<path d="M441 500C441 470 450 442 470 434" fill="none" stroke="#6fb3d0" stroke-width="1.500" opacity=".5"/>
<g fill="#0a0a0a" font-family="'Liberation Sans','DejaVu Sans',sans-serif" font-weight="bold">
<text x="353" y="256" font-size="30" textLength="38" lengthAdjust="spacingAndGlyphs" stroke="#0a0a0a" stroke-width="1.300" stroke-linejoin="round">@</text>
<text x="396.500" y="258" font-size="26" textLength="156" lengthAdjust="spacingAndGlyphs" transform="rotate(-2 396 258)">browncony2902</text>
<text x="423.500" y="277" font-size="22" textLength="75" lengthAdjust="spacingAndGlyphs" transform="rotate(-2.800 423 277)">#Rd297</text>
</g>
</svg>
<div class="abs" style="left:703.500px;top:73px;width:18.500px;height:457px;background:#1b1b1b"></div>
<div class="abs" style="left:703.500px;top:74px;width:15.500px;height:432px;border-radius:0 0 4px 4px;background:linear-gradient(90deg,#1e1e1e,#363636 45%,#3a3a3a 60%,#242424)"></div>
<svg class="abs" style="left:708px;top:75.500px;width:6px;height:4.500px" viewBox="0 0 8 6"><path d="M0 6h8L4 0z" fill="#8c8c8c"/></svg>
<svg class="abs" style="left:708px;top:507.500px;width:6px;height:4.500px" viewBox="0 0 8 6"><path d="M0 0h8L4 6z" fill="#8c8c8c"/></svg>
<div class="abs" style="left:704.500px;top:221.500px;width:13.200px;height:61.500px;border-radius:3.500px;background:linear-gradient(90deg,#5e5e5e,#6c6c6c 40%,#626262)"></div>
<div class="abs" style="left:178px;top:514px;width:544px;height:16px;background:#1b1b1b"></div>
<div class="abs" style="left:178px;top:514.500px;width:532px;height:14px;border-radius:0 4px 4px 0;background:linear-gradient(#1e1e1e,#363636 45%,#3a3a3a 60%,#242424)"></div>
<svg class="abs" style="left:179.500px;top:518px;width:5px;height:7px" viewBox="0 0 6 8"><path d="M6 0v8L0 4z" fill="#8c8c8c"/></svg>
<svg class="abs" style="left:712px;top:518px;width:5px;height:7px" viewBox="0 0 6 8"><path d="M0 0v8L6 4z" fill="#8c8c8c"/></svg>
<div class="abs" style="left:492.300px;top:515.200px;width:83px;height:12.800px;border-radius:3.500px;background:linear-gradient(#5e5e5e,#6e6e6e 40%,#626262)"></div>

<div class="abs" style="left:722px;top:56px;width:300px;height:474px;background:#272727"></div>
<div class="ph" style="left:722px;top:56.3px;width:300px"><span class="x" style="left:123px;top:1px;font-size:9.5px;">Hoa tiêu</span><div class="abs" style="right:15px;top:2px;width:8px;height:8px"><svg viewBox="0 0 12 12"><path d="M6.500 2.500h-4v7h7v-4" fill="none" stroke="#bdbdbd" stroke-width="1.100"/><path d="M6 6l4.500-4.500M7.500 1.500h3v3" fill="none" stroke="#bdbdbd" stroke-width="1.100"/></svg></div><div class="abs" style="right:3px;top:2.500px;width:7.500px;height:7.500px"><svg viewBox="0 0 11 11"><path d="M2 2l6.500 6.500M8.500 2L2 8.500" stroke="#d0d0d0" stroke-width="2.200"/></svg></div></div>
<div class="b" style="left:725.5px;top:75px;"><svg viewBox="0 0 17 17"><circle cx="7.6" cy="7.4" r="3.7" fill="none" stroke="#f2f2f2" stroke-width="1.3"/><path d="M10.4 10.2l3 3" stroke="#f2f2f2" stroke-width="1.8"/><path d="M7.8 5.6v3.8M7 6.2l.8-.7" stroke="#f2f2f2" stroke-width="1" fill="none"/></svg></div>
<div class="b" style="left:751px;top:75px;"><svg viewBox="0 0 17 17"><circle cx="7.6" cy="7.4" r="3.7" fill="none" stroke="#f2f2f2" stroke-width="1.3"/><path d="M10.4 10.2l3 3" stroke="#f2f2f2" stroke-width="1.8"/><path d="M5.8 7.4h3.6M7.6 5.6v3.6" stroke="#f2f2f2" stroke-width="1.1"/></svg></div>
<div class="b" style="left:771px;top:75px;"><svg viewBox="0 0 17 17"><rect x="3.500" y="4" width="10" height="9" fill="none" stroke="#f2f2f2" stroke-width="1"/><path d="M5 5.500h2.600L5 8.100zM12 5.500H9.400L12 8.100zM5 11.500h2.600L5 8.900zM12 11.500H9.400L12 8.900z" fill="#f2f2f2"/></svg></div>
<div class="b" style="left:791px;top:75px;"><svg viewBox="0 0 17 17"><circle cx="7.6" cy="7.4" r="3.7" fill="none" stroke="#f2f2f2" stroke-width="1.3"/><path d="M10.4 10.2l3 3" stroke="#f2f2f2" stroke-width="1.8"/><path d="M5.8 7.4h3.6" stroke="#f2f2f2" stroke-width="1.1"/></svg></div>
<div class="b" style="left:817.5px;top:75px;"><svg viewBox="0 0 17 17"><path d="M4.600 5.200A5.200 5.200 0 1 1 3.500 9.500" fill="none" stroke="#f2f2f2" stroke-width="1.200"/><path d="M3 3.500l.4 3 2.900-.8z" fill="#f2f2f2"/><rect x="6" y="6.500" width="5" height="4" transform="rotate(-20 8.500 8.500)" fill="#f2f2f2"/></svg></div>
<div class="b dk" style="left:837.5px;top:75px;"><svg viewBox="0 0 17 17"><rect x="5.500" y="6" width="6" height="5" fill="#f2f2f2"/><path d="M3.500 4l2 2M13.500 4l-2 2M3.500 13l2-2M13.500 13l-2-2" stroke="#f2f2f2" stroke-width="1.100"/></svg></div>
<div class="b" style="left:857px;top:75px;"><svg viewBox="0 0 17 17"><path d="M12.400 5.200A5.200 5.200 0 1 0 13.500 9.500" fill="none" stroke="#f2f2f2" stroke-width="1.200"/><path d="M14 3.500l-.4 3-2.900-.8z" fill="#f2f2f2"/><rect x="6" y="6.500" width="5" height="4" transform="rotate(20 8.500 8.500)" fill="#f2f2f2"/></svg></div>
<div class="b" style="left:882.5px;top:75px;"><svg viewBox="0 0 17 17"><path d="M3.5 13V8.5h3.500V13zM10 13V6.500h3.500V13z" fill="none" stroke="#f2f2f2" stroke-width="1.1"/><path d="M3.500 13V8.500h3.500V13z" fill="#f2f2f2"/><path d="M5 6.500c0-3.500 7-3.500 7-.5" fill="none" stroke="#f2f2f2" stroke-width="1.1"/><path d="M8.500 4v9.500" stroke="#f2f2f2" stroke-width=".8" stroke-dasharray="1 1"/></svg></div>
<div class="sep" style="left:746.5px;top:79px;height:10px"></div>
<div class="sep" style="left:812.5px;top:79px;height:10px"></div>
<div class="sep" style="left:878.5px;top:79px;height:10px"></div>
<div class="abs" style="left:722px;top:95px;width:300px;height:17.500px;background:#424242"></div>
<svg class="abs" style="left:864px;top:95px;width:17px;height:17.500px" viewBox="0 0 17 17.500"><rect width="17" height="17.500" fill="#fff"/><path d="M1 8c2-2 5-2.500 8-1.500s5 .5 7-1v7c-2 2-6 2.500-9 1.500s-4-.5-6 1z" fill="#d3eafb"/><path d="M3 10.500h2M6 10h3M10 11h3" stroke="#8fbcd8" stroke-width=".8"/><rect x="11.500" y="3" width="4.500" height="3.500" fill="#e82828"/></svg>
<div class="ph" style="left:722px;top:115.5px;width:300px"><span class="x" style="left:133px;top:1px;font-size:9.5px;">Lớp</span><div class="abs" style="right:15px;top:2px;width:8px;height:8px"><svg viewBox="0 0 12 12"><path d="M6.500 2.500h-4v7h7v-4" fill="none" stroke="#bdbdbd" stroke-width="1.100"/><path d="M6 6l4.500-4.500M7.500 1.500h3v3" fill="none" stroke="#bdbdbd" stroke-width="1.100"/></svg></div><div class="abs" style="right:3px;top:2.500px;width:7.500px;height:7.500px"><svg viewBox="0 0 11 11"><path d="M2 2l6.500 6.500M8.500 2L2 8.500" stroke="#d0d0d0" stroke-width="2.200"/></svg></div></div>
<span class="x" style="left:726.5px;top:137px;font-size:9.5px;color:#d4d4d4;">Độ trong</span>
<div class="abs" style="left:802px;top:137px;width:176px;height:11px;background:linear-gradient(90deg,#7cc0f2,#5aa6e0 50%,#4a94d2)"></div>
<span class="x" style="left:983px;top:137px;font-size:9.5px;color:#d4d4d4;">100 %</span>
<span class="x" style="left:726.5px;top:156px;font-size:9.5px;color:#d4d4d4;">Pha trộn</span>
<div class="abs" style="left:802px;top:154.500px;width:216px;height:14px;background:#424242;border-radius:2px"></div>
<span class="x" style="left:805px;top:156px;font-size:9.5px;color:#d4d4d4;transform:scaleX(0.85);">Bình thường</span>
<svg class="abs" style="left:1009.500px;top:160px;width:4.500px;height:3px" viewBox="0 0 7 4"><path d="M0 0h7L3.500 4z" fill="#8a8a8a"/></svg>
<div class="cb" style="left:729px;top:176.500px"></div>
<span class="x" style="left:741px;top:175px;font-size:9.5px;color:#d4d4d4;transform:scaleX(0.85);">Bảo vệ alpha</span>
<div class="cb" style="left:828px;top:176.500px"></div>
<span class="x" style="left:840px;top:175px;font-size:9.5px;color:#d4d4d4;transform:scaleX(0.85);">Xén bớt</span>
<div class="cb" style="left:926.5px;top:176.500px"></div>
<span class="x" style="left:938.5px;top:175px;font-size:9.5px;color:#d4d4d4;transform:scaleX(0.85);">Khóa</span>
<div class="abs" style="left:724.500px;top:191px;width:280.500px;height:214.500px;background:#2a2a2a;overflow:hidden">
<div class="abs" style="left:0;top:1px;width:281px;height:29px;background:#595959"></div>
<div class="abs" style="left:14.500px;top:1px;width:266px;height:29px;background:#4e9ad6"></div>
<div class="abs" style="left:3.500px;top:11.5px;width:7px;height:7px;border-radius:50%;background:radial-gradient(#e4e4e4 40%,#b8b8b8)"></div>
<div class="abs chk" style="left:25.500px;top:1.5px;width:26px;height:28px;background-size:6.400px 6.400px;background-position:0 0,3.200px 3.200px"></div>
<span class="x" style="left:63.5px;top:10px;font-size:9.5px;color:#fff;transform:scaleX(0.92);font-weight:bold;">Lớp9</span>
<div class="abs" style="left:0;top:31px;width:281px;height:29px;background:#595959"></div>
<div class="abs" style="left:3.500px;top:41.5px;width:7px;height:7px;border-radius:50%;background:radial-gradient(#e4e4e4 40%,#b8b8b8)"></div>
<div class="abs chk" style="left:25.500px;top:31.5px;width:26px;height:28px;background-size:6.400px 6.400px;background-position:0 0,3.200px 3.200px"></div>
<span class="x" style="left:63.5px;top:40px;font-size:9.5px;color:#f0f0f0;transform:scaleX(0.92);">Lớp8</span>
<div class="abs" style="left:0;top:61px;width:281px;height:29px;background:#595959"></div>
<div class="abs" style="left:3.500px;top:71.5px;width:7px;height:7px;border-radius:50%;background:radial-gradient(#e4e4e4 40%,#b8b8b8)"></div>
<div class="abs chk" style="left:25.500px;top:61.5px;width:26px;height:28px;background-size:6.400px 6.400px;background-position:0 0,3.200px 3.200px"></div>
<div class="abs" style="left:35.5px;top:77px;width:4.5px;height:1.3px;background:#4a87a8;opacity:0.85"></div>
<span class="x" style="left:63.5px;top:70px;font-size:9.5px;color:#f0f0f0;transform:scaleX(0.92);">Lớp4</span>
<div class="abs" style="left:0;top:91px;width:281px;height:29px;background:#595959"></div>
<div class="abs" style="left:3.500px;top:101.5px;width:7px;height:7px;border-radius:50%;background:radial-gradient(#e4e4e4 40%,#b8b8b8)"></div>
<div class="abs chk" style="left:25.500px;top:91.5px;width:26px;height:28px;background-size:6.400px 6.400px;background-position:0 0,3.200px 3.200px"></div>
<div class="abs" style="left:34.5px;top:107px;width:4.5px;height:1.3px;background:#223;opacity:0.85"></div>
<span class="x" style="left:63.5px;top:100px;font-size:9.5px;color:#f0f0f0;transform:scaleX(0.92);">Lớp4</span>
<div class="abs" style="left:0;top:121px;width:281px;height:29px;background:#595959"></div>
<div class="abs" style="left:3.500px;top:131.5px;width:7px;height:7px;border-radius:50%;background:radial-gradient(#e4e4e4 40%,#b8b8b8)"></div>
<div class="abs chk" style="left:25.500px;top:121.5px;width:26px;height:28px;background-size:6.400px 6.400px;background-position:0 0,3.200px 3.200px"></div>
<div class="abs" style="left:42.5px;top:135px;width:4.5px;height:1.3px;background:#5aa7c9;opacity:0.85"></div>
<span class="x" style="left:63.5px;top:130px;font-size:9.5px;color:#f0f0f0;transform:scaleX(0.92);">Lớp3</span>
<div class="abs" style="left:0;top:151px;width:281px;height:29px;background:#595959"></div>
<div class="abs" style="left:3.500px;top:161.5px;width:7px;height:7px;border-radius:50%;background:radial-gradient(#e4e4e4 40%,#b8b8b8)"></div>
<div class="abs chk" style="left:25.500px;top:151.5px;width:26px;height:28px;background-size:6.400px 6.400px;background-position:0 0,3.200px 3.200px"></div>
<div class="abs" style="left:42.5px;top:166px;width:4.5px;height:1.3px;background:#223;opacity:0.85"></div>
<span class="x" style="left:63.5px;top:160px;font-size:9.5px;color:#f0f0f0;transform:scaleX(0.92);">Lớp3</span>
<div class="abs" style="left:0;top:181px;width:281px;height:29px;background:#595959"></div>
<div class="abs" style="left:3.500px;top:191.5px;width:7px;height:7px;border-radius:50%;background:radial-gradient(#e4e4e4 40%,#b8b8b8)"></div>
<div class="abs chk" style="left:25.500px;top:181.5px;width:26px;height:28px;background-size:6.400px 6.400px;background-position:0 0,3.200px 3.200px"></div>
<div class="abs" style="left:27.5px;top:191px;width:10px;height:1px;background:#6aa0d8;opacity:0.6"></div>
<span class="x" style="left:63.5px;top:190px;font-size:9.5px;color:#f0f0f0;transform:scaleX(0.92);">Lớp2</span>
<div class="abs" style="left:0;top:211px;width:281px;height:29px;background:#595959"></div>
<div class="abs" style="left:3.500px;top:221.5px;width:7px;height:7px;border-radius:50%;background:radial-gradient(#e4e4e4 40%,#b8b8b8)"></div>
<div class="abs chk" style="left:25.500px;top:211.5px;width:26px;height:28px;background-size:6.400px 6.400px;background-position:0 0,3.200px 3.200px"></div>
<span class="x" style="left:63.5px;top:220px;font-size:9.5px;color:#f0f0f0;transform:scaleX(0.92);">Lớp1</span>
<svg class="abs" style="left:265px;top:9px;width:13px;height:13px" viewBox="0 0 10 10"><circle cx="5" cy="5" r="3.500" fill="none" stroke="#fff" stroke-width="2.400" stroke-dasharray="1.500 1.249"/><circle cx="5" cy="5" r="3.100" fill="#fff"/><circle cx="5" cy="5" r="1.150" fill="#4e9ad6"/></svg>
</div>
<div class="abs" style="left:1007px;top:191px;width:14px;height:214.5px;background:linear-gradient(90deg,#202020,#383838 50%,#262626)"><svg class="abs" style="left:4.0px;top:3px;width:6px;height:4.500px" viewBox="0 0 7 5"><path d="M0 5h7L3.500 0z" fill="#a8a8a8"/></svg><svg class="abs" style="left:4.0px;bottom:3px;width:6px;height:4.500px" viewBox="0 0 7 5"><path d="M0 0h7L3.500 5z" fill="#a8a8a8"/></svg><div class="abs" style="left:0.500px;top:9px;width:13px;height:155.5px;border-radius:3px;background:linear-gradient(90deg,#5a5a5a,#6a6a6a 40%,#5e5e5e)"></div></div>
<div class="b" style="left:727.5px;top:409px;height:17.5px;"><svg viewBox="0 0 17 17"><path d="M4.5 3.500h5.500l2.500 2.500v7.500h-8z" fill="none" stroke="#f2f2f2" stroke-width="1.2"/><path d="M10 3.500v2.500h2.500" fill="none" stroke="#f2f2f2" stroke-width="1"/></svg></div>
<div class="b" style="left:747.5px;top:409px;height:17.5px;"><svg viewBox="0 0 17 17"><path d="M4.5 3.500h5.500l2.500 2.500v7.500h-8z" fill="none" stroke="#f2f2f2" stroke-width="1.100"/><text x="8.500" y="12" font-size="6.500" font-family="Liberation Sans,sans-serif" fill="#f2f2f2" text-anchor="middle" font-weight="bold">8</text></svg></div>
<div class="b" style="left:767.5px;top:409px;height:17.5px;"><svg viewBox="0 0 17 17"><path d="M4.5 3.500h5.500l2.500 2.500v7.500h-8z" fill="none" stroke="#f2f2f2" stroke-width="1.100"/><text x="8.500" y="12" font-size="6.500" font-family="Liberation Sans,sans-serif" fill="#f2f2f2" text-anchor="middle" font-weight="bold">1</text></svg></div>
<div class="b" style="left:787.5px;top:409px;width:23px;height:17.5px;"><svg viewBox="0 0 23 17"><path d="M4 3.500h5l2.500 2.500v3M9 13.500H4v-10" fill="none" stroke="#f2f2f2" stroke-width="1.200"/><path d="M11.500 10v5M9 12.500h5" stroke="#f2f2f2" stroke-width="1.400"/><path d="M17 8l2.500 3 2.500-3z" fill="#f2f2f2"/></svg></div>
<div class="b" style="left:813px;top:409px;height:17.5px;"><svg viewBox="0 0 17 17"><path d="M3 4.500h4l1.200 1.500H14v7.500H3z" fill="#f2f2f2"/></svg></div>
<div class="b" style="left:838.5px;top:409px;height:17.5px;"><svg viewBox="0 0 17 17"><path d="M6.500 4h7v7h-7z" fill="none" stroke="#f2f2f2" stroke-width="1.100"/><path d="M4 6.500h7v7H4z" fill="#484848" stroke="#f2f2f2" stroke-width="1.100"/></svg></div>
<div class="b" style="left:858.5px;top:409px;height:17.5px;"><svg viewBox="0 0 17 17"><path d="M4 3.500h4v4H4zM4 9.500h4v4H4z" fill="#f2f2f2"/><path d="M8 5.500h2.500v6H8M10.500 8.500H14" fill="none" stroke="#f2f2f2" stroke-width="1.100"/><path d="M12 6.500h2.500v4H12z" fill="#f2f2f2"/></svg></div>
<div class="b" style="left:884px;top:409px;height:17.5px;"><svg viewBox="0 0 17 17"><path d="M4.500 6h8v8h-8z" fill="none" stroke="#f2f2f2" stroke-width="1.200"/><path d="M3.500 5h10M6.500 5V3.500h4V5M6.800 7.500v5M8.500 7.500v5M10.200 7.500v5" fill="none" stroke="#f2f2f2" stroke-width="1.100"/></svg></div>
<div class="sep" style="left:834px;top:413px;height:10px"></div>
<div class="sep" style="left:879.5px;top:413px;height:10px"></div>
<div class="ph" style="left:722px;top:434.5px;width:300px"><span class="x" style="left:120px;top:1px;font-size:9.5px;">Reference</span><div class="abs" style="right:15px;top:2px;width:8px;height:8px"><svg viewBox="0 0 12 12"><path d="M6.500 2.500h-4v7h7v-4" fill="none" stroke="#bdbdbd" stroke-width="1.100"/><path d="M6 6l4.500-4.500M7.500 1.500h3v3" fill="none" stroke="#bdbdbd" stroke-width="1.100"/></svg></div><div class="abs" style="right:3px;top:2.500px;width:7.500px;height:7.500px"><svg viewBox="0 0 11 11"><path d="M2 2l6.500 6.500M8.500 2L2 8.500" stroke="#d0d0d0" stroke-width="2.200"/></svg></div></div>
<div class="b" style="left:725.5px;top:453px;"><svg viewBox="0 0 17 17"><path d="M4.600 10.600a2.600 2.600 0 0 1-.3-5.200 3.400 3.400 0 0 1 6.500-1 2.900 2.900 0 0 1 2.400 2.900 2.800 2.800 0 0 1-2.700 3.300z" fill="#f2f2f2"/><path d="M8.500 14.500V8.500M6 10.500l2.500-2.700 2.500 2.700" stroke="#484848" stroke-width="2.600" fill="none"/><path d="M8.500 14.500V8.800M6.300 10.800l2.200-2.400 2.200 2.400" stroke="#f2f2f2" stroke-width="1.400" fill="none"/></svg></div>
<div class="b" style="left:746px;top:453px;"><svg viewBox="0 0 17 17"><path d="M3 4.500h4l1.200 1.500H13v2H5.500L3 13z" fill="#f2f2f2"/><path d="M5.800 8.800H15L12.800 13.500H3.400z" fill="#f2f2f2"/></svg></div>
<div class="b dk" style="left:766.5px;top:453px;"><svg viewBox="0 0 17 17"><path d="M5.500 5.500l6 6M11.500 5.500l-6 6" stroke="#f2f2f2" stroke-width="1.800"/></svg></div>
<div class="b dk" style="left:791.5px;top:453px;"><svg viewBox="0 0 17 17"><circle cx="7.6" cy="7.4" r="3.7" fill="none" stroke="#f2f2f2" stroke-width="1.3"/><path d="M10.4 10.2l3 3" stroke="#f2f2f2" stroke-width="1.8"/><path d="M5.8 7.4h3.6M7.6 5.6v3.6" stroke="#f2f2f2" stroke-width="1.1"/></svg></div>
<div class="b dk" style="left:811.5px;top:453px;"><svg viewBox="0 0 17 17"><rect x="3.500" y="4" width="10" height="9" fill="none" stroke="#f2f2f2" stroke-width="1"/><path d="M5 5.500h2.600L5 8.100zM12 5.500H9.400L12 8.100zM5 11.500h2.600L5 8.900zM12 11.500H9.400L12 8.900z" fill="#f2f2f2"/></svg></div>
<div class="b dk" style="left:831.5px;top:453px;"><svg viewBox="0 0 17 17"><circle cx="7.6" cy="7.4" r="3.7" fill="none" stroke="#f2f2f2" stroke-width="1.3"/><path d="M10.4 10.2l3 3" stroke="#f2f2f2" stroke-width="1.8"/><path d="M5.8 7.4h3.6" stroke="#f2f2f2" stroke-width="1.1"/></svg></div>
<div class="b dk" style="left:857.5px;top:453px;"><svg viewBox="0 0 17 17"><path d="M12.500 2.500l2 2-2 2.200-.8-.6-5.500 6-2.200.6.600-2.200 5.700-5.700-.6-.7z" fill="none" stroke="#f2f2f2" stroke-width="1.200"/><path d="M11 4.500l2 2 1.500-2-1.800-1.800z" fill="#f2f2f2"/></svg></div>
<div class="b on" style="left:877.5px;top:453px;"><svg viewBox="0 0 17 17"><g stroke="#f2f2f2" stroke-width="1.700" stroke-linecap="round" fill="none"><path d="M6.300 9.500L5.400 4.800M8.300 9L8 3.300M10.300 9L10.600 3.600M12.100 9.800L13 5.400M5.600 12L3.400 9.400"/></g><path d="M5.300 8.500L12.900 8.500L12.500 12.200C12.100 14 10.700 15 9 15C7.200 15 6 14 5.400 12.500z" fill="#f2f2f2"/></svg></div>
<div class="b dk" style="left:903.5px;top:453px;"><svg viewBox="0 0 17 17"><path d="M4.600 5.200A5.200 5.200 0 1 1 3.500 9.500" fill="none" stroke="#f2f2f2" stroke-width="1.200"/><path d="M3 3.500l.4 3 2.900-.8z" fill="#f2f2f2"/><rect x="6" y="6.500" width="5" height="4" transform="rotate(-20 8.500 8.500)" fill="#f2f2f2"/></svg></div>
<div class="b dk" style="left:923.5px;top:453px;"><svg viewBox="0 0 17 17"><rect x="5.500" y="6" width="6" height="5" fill="#f2f2f2"/><path d="M3.500 4l2 2M13.500 4l-2 2M3.500 13l2-2M13.500 13l-2-2" stroke="#f2f2f2" stroke-width="1.100"/></svg></div>
<div class="b dk" style="left:944px;top:453px;"><svg viewBox="0 0 17 17"><path d="M12.400 5.200A5.200 5.200 0 1 0 13.500 9.500" fill="none" stroke="#f2f2f2" stroke-width="1.200"/><path d="M14 3.500l-.4 3-2.900-.8z" fill="#f2f2f2"/><rect x="6" y="6.500" width="5" height="4" transform="rotate(20 8.500 8.500)" fill="#f2f2f2"/></svg></div>
<div class="b dk" style="left:968.5px;top:453px;"><svg viewBox="0 0 17 17"><path d="M3.5 13V8.5h3.500V13zM10 13V6.500h3.500V13z" fill="none" stroke="#f2f2f2" stroke-width="1.1"/><path d="M3.500 13V8.500h3.500V13z" fill="#f2f2f2"/><path d="M5 6.500c0-3.500 7-3.500 7-.5" fill="none" stroke="#f2f2f2" stroke-width="1.1"/><path d="M8.500 4v9.500" stroke="#f2f2f2" stroke-width=".8" stroke-dasharray="1 1"/></svg></div>
<div class="sep" style="left:786.5px;top:457px;height:10px"></div>
<div class="sep" style="left:852.5px;top:457px;height:10px"></div>
<div class="sep" style="left:898.5px;top:457px;height:10px"></div>
<div class="sep" style="left:964.5px;top:457px;height:10px"></div>
<div class="ph" style="left:722px;top:477.2px;width:300px"><span class="x" style="left:120px;top:1px;font-size:9.5px;">Brush Size</span><div class="abs" style="right:15px;top:2px;width:8px;height:8px"><svg viewBox="0 0 12 12"><path d="M6.500 2.500h-4v7h7v-4" fill="none" stroke="#bdbdbd" stroke-width="1.100"/><path d="M6 6l4.500-4.500M7.500 1.500h3v3" fill="none" stroke="#bdbdbd" stroke-width="1.100"/></svg></div><div class="abs" style="right:3px;top:2.500px;width:7.500px;height:7.500px"><svg viewBox="0 0 11 11"><path d="M2 2l6.500 6.500M8.500 2L2 8.500" stroke="#d0d0d0" stroke-width="2.200"/></svg></div></div>
<div class="abs" style="left:722px;top:493px;width:285.500px;height:36.500px;background:#474747"></div>
<div class="abs" style="left:722.50px;top:493px;width:29px;height:16px;background:#505050"></div>
<div class="abs" style="left:722.50px;top:510px;width:29px;height:19.500px;background:#505050;overflow:hidden"><div class="abs" style="left:9.0px;top:9.2px;width:11.0px;height:11.0px;border-radius:50%;background:#f2f2f2"></div></div>
<span class="x" style="left:722.50px;top:498.500px;width:33.300px;text-align:center;font-size:8.500px;color:#e8e8e8">1</span>
<div class="abs" style="left:752.35px;top:493px;width:29px;height:16px;background:#505050"></div>
<div class="abs" style="left:752.35px;top:510px;width:29px;height:19.500px;background:#505050;overflow:hidden"><div class="abs" style="left:6.8px;top:7.0px;width:15.4px;height:15.4px;border-radius:50%;background:#f2f2f2"></div></div>
<span class="x" style="left:752.35px;top:498.500px;width:33.300px;text-align:center;font-size:8.500px;color:#e8e8e8">1.5</span>
<div class="abs" style="left:782.20px;top:493px;width:29px;height:16px;background:#505050"></div>
<div class="abs" style="left:782.20px;top:510px;width:29px;height:19.500px;background:#505050;overflow:hidden"><div class="abs" style="left:5.4px;top:5.6px;width:18.2px;height:18.2px;border-radius:50%;background:#f2f2f2"></div></div>
<span class="x" style="left:782.20px;top:498.500px;width:33.300px;text-align:center;font-size:8.500px;color:#e8e8e8">2</span>
<div class="abs" style="left:812.05px;top:493px;width:29px;height:16px;background:#505050"></div>
<div class="abs" style="left:812.05px;top:510px;width:29px;height:19.500px;background:#505050;overflow:hidden"><div class="abs" style="left:5.4px;top:5.6px;width:18.2px;height:18.2px;border-radius:50%;background:#f2f2f2"></div></div>
<span class="x" style="left:812.05px;top:498.500px;width:33.300px;text-align:center;font-size:8.500px;color:#e8e8e8">3</span>
<div class="abs" style="left:841.90px;top:493px;width:29px;height:16px;background:#505050"></div>
<div class="abs" style="left:841.90px;top:510px;width:29px;height:19.500px;background:#505050;overflow:hidden"><div class="abs" style="left:5.4px;top:5.6px;width:18.2px;height:18.2px;border-radius:50%;background:#f2f2f2"></div></div>
<span class="x" style="left:841.90px;top:498.500px;width:33.300px;text-align:center;font-size:8.500px;color:#e8e8e8">4</span>
<div class="abs" style="left:871.75px;top:493px;width:29px;height:16px;background:#505050"></div>
<div class="abs" style="left:871.75px;top:510px;width:29px;height:19.500px;background:#505050;overflow:hidden"><div class="abs" style="left:5.4px;top:5.6px;width:18.2px;height:18.2px;border-radius:50%;background:#f2f2f2"></div></div>
<span class="x" style="left:871.75px;top:498.500px;width:33.300px;text-align:center;font-size:8.500px;color:#e8e8e8">5</span>
<div class="abs" style="left:901.60px;top:493px;width:29px;height:16px;background:#505050"></div>
<div class="abs" style="left:901.60px;top:510px;width:29px;height:19.500px;background:#505050;overflow:hidden"><div class="abs" style="left:5.4px;top:5.6px;width:18.2px;height:18.2px;border-radius:50%;background:#f2f2f2"></div></div>
<span class="x" style="left:901.60px;top:498.500px;width:33.300px;text-align:center;font-size:8.500px;color:#e8e8e8">7</span>
<div class="abs" style="left:931.45px;top:493px;width:29px;height:16px;background:#505050"></div>
<div class="abs" style="left:931.45px;top:510px;width:29px;height:19.500px;background:#505050;overflow:hidden"><div class="abs" style="left:5.4px;top:5.6px;width:18.2px;height:18.2px;border-radius:50%;background:#f2f2f2"></div></div>
<span class="x" style="left:931.45px;top:498.500px;width:33.300px;text-align:center;font-size:8.500px;color:#e8e8e8">10</span>
<div class="abs" style="left:961.30px;top:493px;width:29px;height:16px;background:#505050"></div>
<div class="abs" style="left:961.30px;top:510px;width:29px;height:19.500px;background:#505050;overflow:hidden"><div class="abs" style="left:5.4px;top:5.6px;width:18.2px;height:18.2px;border-radius:50%;background:#f2f2f2"></div></div>
<span class="x" style="left:961.30px;top:498.500px;width:33.300px;text-align:center;font-size:8.500px;color:#e8e8e8">12</span>
<div class="abs" style="left:1007.5px;top:493px;width:14.5px;height:36.5px;background:linear-gradient(90deg,#202020,#383838 50%,#262626)"><svg class="abs" style="left:4.25px;top:3px;width:6px;height:4.500px" viewBox="0 0 7 5"><path d="M0 5h7L3.500 0z" fill="#a8a8a8"/></svg><svg class="abs" style="left:4.25px;bottom:3px;width:6px;height:4.500px" viewBox="0 0 7 5"><path d="M0 0h7L3.500 5z" fill="#a8a8a8"/></svg><div class="abs" style="left:0.500px;top:12.5px;width:13.5px;height:6.0px;border-radius:3px;background:linear-gradient(90deg,#5a5a5a,#6a6a6a 40%,#5e5e5e)"></div></div>
<div class="abs" style="left:0;top:529.500px;width:1022px;height:15px;background:#1d1d1d"></div><div class="abs" style="left:0;top:544.500px;width:1024px;height:4px;background:#fff"></div>
<span class="x" style="left:4px;top:531.5px;font-size:9.5px;color:#d8d8d8;">6889 * 6889 pixel</span>
<span class="x" style="left:76px;top:531.5px;font-size:9.5px;color:#d8d8d8;">(50 * 50cm)</span>
<span class="x" style="left:128px;top:531.5px;font-size:9.5px;color:#d8d8d8;">350 dpi</span>
<span class="x" style="left:163px;top:531.5px;font-size:9.5px;color:#d8d8d8;">33 %</span>
<span class="x" style="left:187.5px;top:531.5px;font-size:9.5px;color:#d8d8d8;transform:scaleX(0.85);">( 6664, 2919 )</span>
<span class="x" style="left:245.5px;top:531.5px;font-size:9.5px;color:#d8d8d8;transform:scaleX(0.938);">Vẽ một đường thẳng bằng cách giữ phím Shift, Thay đổi cỡ cọ bằng cách giữ phím Ctrl, Alt và kéo</span>
<div class="abs" style="left:1022px;top:14px;width:2px;height:534px;background:#f4f8fa"></div>
</body>
</html>
